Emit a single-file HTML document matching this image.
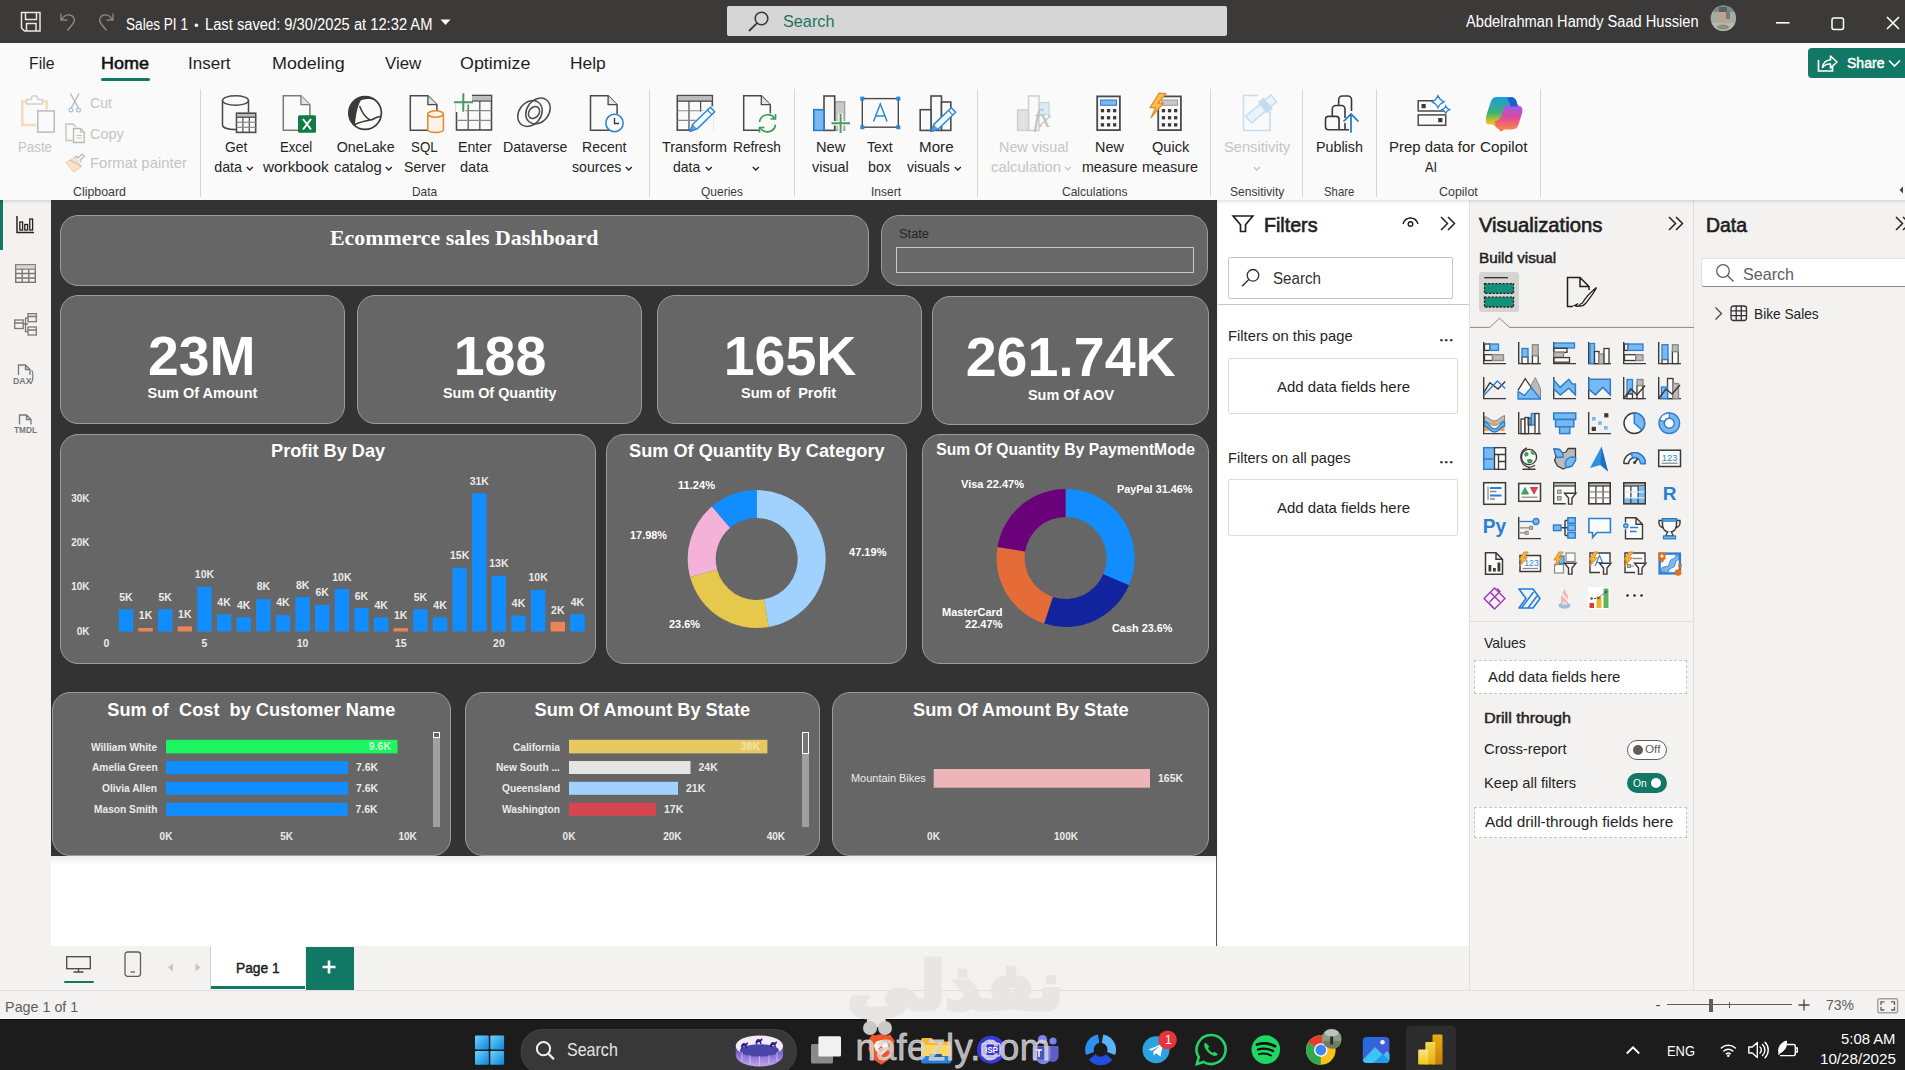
<!DOCTYPE html>
<html lang="en"><head><meta charset="utf-8"><title>Sales PI 1 - Power BI Desktop</title>
<style>
html,body{margin:0;padding:0}
body{width:1905px;height:1070px;position:relative;overflow:hidden;background:#f3f2f1;font-family:"Liberation Sans",sans-serif;color:#000}
.r{position:absolute;box-sizing:border-box;display:block}
.t{position:absolute;white-space:pre;display:block;transform-origin:0 0}
.card{background:#666;border:1px solid #9c9c9c;border-radius:18px}
svg{overflow:visible}
</style></head><body>

<div class="r titlebar" style="left:0px;top:0px;width:1905px;height:42.5px;background:#3b3a39">
<svg class="r" style="left:20px;top:11px;" width="22" height="22" viewBox="0 0 22 22"><path d="M1.5 1.5h18.5v18.5h-15.5l-3-3z M5.5 1.5v7h11v-7 M6.5 20v-7.5h9.5v7.5" fill="none" stroke="#e8e8e8" stroke-width="1.5"/></svg>
<svg class="r" style="left:58px;top:11px;" width="22" height="22" viewBox="0 0 22 22"><path d="M3 2.5v6.5h6.5 M3.5 8.5c2-3 5-5 8.5-4.5c4 .8 5.5 4.5 3.5 8l-6 7.5" fill="none" stroke="#8a8886" stroke-width="1.4"/></svg>
<svg class="r" style="left:93.5px;top:11px;" width="22" height="22" viewBox="0 0 22 22"><path d="M19 2.5v6.5h-6.5 M18.5 8.5c-2-3-5-5-8.5-4.5c-4 .8-5.5 4.5-3.5 8l6 7.5" fill="none" stroke="#8a8886" stroke-width="1.4"/></svg>
<span class="t" style="left:126.30px;top:16.79px;font-size:15.6px;line-height:15.6px;color:#fff;transform:scaleX(0.8719);">Sales PI 1</span>
<span class="t" style="left:194.30px;top:19.84px;font-size:12px;line-height:12px;color:#fff;">•</span>
<span class="t" style="left:204.50px;top:16.79px;font-size:15.6px;line-height:15.6px;color:#fff;transform:scaleX(0.9436);">Last saved: 9/30/2025 at 12:32 AM</span>
<svg class="r" style="left:440px;top:19px;" width="12" height="8" viewBox="0 0 12 8"><path d="M0.5 0.5h10l-5 5.5z" fill="#fff"/></svg>
<div class="r " style="left:727px;top:6px;width:500px;height:30px;background:#d6d6d6;border-radius:2px">
</div>
<svg class="r" style="left:747px;top:10px;" width="24" height="22" viewBox="0 0 24 22"><circle cx="14.5" cy="8.5" r="6.3" fill="none" stroke="#3b3a39" stroke-width="1.6"/><path d="M10 13.2L2 21" stroke="#3b3a39" stroke-width="1.8"/></svg>
<span class="t" style="left:783.00px;top:13.98px;font-size:16.8px;line-height:16.8px;color:#1f735f;transform:scaleX(0.9675);">Search</span>
<span class="t" style="left:1466.00px;top:13.59px;font-size:15.6px;line-height:15.6px;color:#fff;transform:scaleX(0.9383);">Abdelrahman Hamdy Saad Hussien</span>
<svg class="r" style="left:1710px;top:5px;" width="27" height="27" viewBox="0 0 27 27"><defs><clipPath id="av"><circle cx="13.4" cy="13.3" r="12.7"/></clipPath></defs>
<g clip-path="url(#av)"><rect width="27" height="27" fill="#a7aca3"/><rect x="0" y="0" width="27" height="7" fill="#7d8a86"/><rect x="0" y="18" width="27" height="9" fill="#b9b9ad"/>
<ellipse cx="13" cy="11" rx="3.2" ry="6" fill="#c9a085"/><rect x="9" y="2" width="8" height="5" fill="#5b5f66"/><rect x="16" y="6" width="4" height="8" fill="#6b7c8c"/><ellipse cx="13" cy="22" rx="6" ry="2.5" fill="#8c8c80"/></g></svg>
<svg class="r" style="left:1776px;top:21.5px;" width="14" height="2" viewBox="0 0 14 2"><rect width="13.5" height="1.6" fill="#fff"/></svg>
<svg class="r" style="left:1831px;top:16.5px;" width="14" height="14" viewBox="0 0 14 14"><rect x="1" y="1" width="11.5" height="11.5" rx="2" fill="none" stroke="#fff" stroke-width="1.5"/></svg>
<svg class="r" style="left:1886px;top:16px;" width="14" height="14" viewBox="0 0 14 14"><path d="M1 1l12 12M13 1L1 13" stroke="#fff" stroke-width="1.6"/></svg>
</div>
<div class="r ribbon" style="left:0px;top:42.5px;width:1905px;height:157.5px;background:#fafafa">
<span class="t" style="left:28.50px;top:12.44px;font-size:17.2px;line-height:17.2px;color:#1f1f1f;transform:scaleX(0.9200);">File</span>
<span class="t" style="left:101.30px;top:12.27px;font-size:17.4px;line-height:17.4px;color:#111;-webkit-text-stroke:0.56px #111;transform:scaleX(1.0341);">Home</span>
<span class="t" style="left:188.20px;top:12.44px;font-size:17.2px;line-height:17.2px;color:#1f1f1f;transform:scaleX(0.9903);">Insert</span>
<span class="t" style="left:271.60px;top:12.44px;font-size:17.2px;line-height:17.2px;color:#1f1f1f;transform:scaleX(1.0429);">Modeling</span>
<span class="t" style="left:384.70px;top:12.44px;font-size:17.2px;line-height:17.2px;color:#1f1f1f;transform:scaleX(0.9791);">View</span>
<span class="t" style="left:460.20px;top:12.44px;font-size:17.2px;line-height:17.2px;color:#1f1f1f;transform:scaleX(1.0389);">Optimize</span>
<span class="t" style="left:570.00px;top:12.44px;font-size:17.2px;line-height:17.2px;color:#1f1f1f;transform:scaleX(1.0120);">Help</span>
<div class="r" style="left:101px;top:35.5px;width:48.5px;height:3px;background:#117865;border-radius:1.5px"></div>
<div class="r " style="left:1808px;top:5.5px;width:100px;height:30px;background:#117865;border-radius:4px">
</div>
<svg class="r" style="left:1816px;top:9.5px;" width="22" height="22" viewBox="0 0 22 22"><path d="M2.5 8v11h14v-5" fill="none" stroke="#fff" stroke-width="1.7"/><path d="M6.5 15.5c.5-5 4-7.5 8-7.5v-4l6.5 6-6.5 6v-4c-3.500-.3-6 .8-8 3.500z" fill="none" stroke="#fff" stroke-width="1.6" stroke-linejoin="round"/></svg>
<span class="t" style="left:1847.00px;top:12.28px;font-size:15.5px;line-height:15.5px;color:#fff;-webkit-text-stroke:0.50px #fff;transform:scaleX(0.9066);">Share</span>
<svg class="r" style="left:1888px;top:16.5px;" width="14" height="9" viewBox="0 0 14 9"><path d="M1 1.500l5.500 5.500l5.500-5.500" fill="none" stroke="#fff" stroke-width="1.6"/></svg>
</div>
<div class="r ribbonbody" style="left:0px;top:85px;width:1905px;height:115px;">
<svg class="r" style="left:20px;top:9px;" width="36" height="40" viewBox="0 0 36 40"><path d="M6.500 7.500h-4.200v23.500h14" fill="none" stroke="#f6dcb8" stroke-width="2.600"/><path d="M22.500 7.500h4.200v8" fill="none" stroke="#f6dcb8" stroke-width="2.600"/>
<path d="M6.500 10v-4.500h4.500c.3-2.500 1.800-3.700 3.500-3.700s3.200 1.200 3.500 3.700h4.500v4.500z" fill="#fafafa" stroke="#d2d0ce" stroke-width="1.400"/>
<rect x="17.800" y="16.900" width="16.400" height="21.200" fill="#fafafa" stroke="#bdbbb9" stroke-width="1.500"/></svg>
<span class="t" style="left:18.00px;top:55.10px;font-size:14.3px;line-height:14.3px;color:#c6c4c2;transform:scaleX(0.9298);">Paste</span>
<svg class="r" style="left:66px;top:7px;" width="18" height="22" viewBox="0 0 18 22"><path d="M4.500 1.500l8 15M13 1.500l-8 15" stroke="#b5b3b1" stroke-width="1.200" fill="none"/><circle cx="5" cy="18" r="1.900" fill="none" stroke="#9fc3d6" stroke-width="1.200"/><circle cx="12.500" cy="18" r="1.900" fill="none" stroke="#9fc3d6" stroke-width="1.200"/></svg>
<span class="t" style="left:90.20px;top:11.10px;font-size:14.3px;line-height:14.3px;color:#c6c4c2;transform:scaleX(0.9886);">Cut</span>
<svg class="r" style="left:65px;top:38px;" width="21" height="21" viewBox="0 0 21 21"><path d="M7.500 17.500h-6.500v-16.500h7l3 3" fill="#fafafa" stroke="#c4c2c0" stroke-width="1.300"/><path d="M8.500 5.500h7l3.700 3.700v10.300h-10.700z" fill="#fafafa" stroke="#b9b7b5" stroke-width="1.300"/><path d="M15.500 5.500v3.700h3.700M11.500 12.500h5.500M11.500 15h5.500" stroke="#c4c2c0" stroke-width="1.100" fill="none"/></svg>
<span class="t" style="left:90.20px;top:41.70px;font-size:14.3px;line-height:14.3px;color:#c6c4c2;transform:scaleX(1.0125);">Copy</span>
<svg class="r" style="left:65px;top:68px;" width="21" height="20" viewBox="0 0 21 20"><path d="M1 9.500l8.500-5l7 9l-8 5.500z" fill="#fbe3c8" stroke="#f3c9a0" stroke-width="1"/><path d="M5 7l11.500 6.500" stroke="#c4c2c0" stroke-width="1.200"/><path d="M9.500 4.500l1.800-1.200l1.500 1.800l4.500-4l2 2.200l-4.300 4l1.500 2" fill="#fafafa" stroke="#bdbbb9" stroke-width="1.300"/></svg>
<span class="t" style="left:90.20px;top:71.10px;font-size:14.3px;line-height:14.3px;color:#c6c4c2;transform:scaleX(1.0431);">Format painter</span>
<span class="t" style="left:73.40px;top:101.13px;font-size:12.6px;line-height:12.6px;color:#3b3a39;transform:scaleX(0.9827);">Clipboard</span>
<div class="r" style="left:200px;top:3.5px;width:1px;height:108px;background:#d8d6d4"></div>
<span class="t" style="left:224.60px;top:55.10px;font-size:14.3px;line-height:14.3px;color:#252423;transform:scaleX(0.9719);">Get</span>
<span class="t" style="left:214.20px;top:75.20px;font-size:14.3px;line-height:14.3px;color:#252423;">data</span>
<span class="t" style="left:280.20px;top:55.10px;font-size:14.3px;line-height:14.3px;color:#252423;transform:scaleX(0.9208);">Excel</span>
<span class="t" style="left:263.00px;top:75.20px;font-size:14.3px;line-height:14.3px;color:#252423;transform:scaleX(1.0718);">workbook</span>
<span class="t" style="left:336.70px;top:55.10px;font-size:14.3px;line-height:14.3px;color:#252423;">OneLake</span>
<span class="t" style="left:334.00px;top:75.20px;font-size:14.3px;line-height:14.3px;color:#252423;transform:scaleX(1.0322);">catalog</span>
<span class="t" style="left:410.80px;top:55.10px;font-size:14.3px;line-height:14.3px;color:#252423;transform:scaleX(0.9331);">SQL</span>
<span class="t" style="left:404.00px;top:75.20px;font-size:14.3px;line-height:14.3px;color:#252423;transform:scaleX(0.9876);">Server</span>
<span class="t" style="left:457.70px;top:55.10px;font-size:14.3px;line-height:14.3px;color:#252423;transform:scaleX(0.9859);">Enter</span>
<span class="t" style="left:460.00px;top:75.20px;font-size:14.3px;line-height:14.3px;color:#252423;transform:scaleX(1.0204);">data</span>
<span class="t" style="left:502.50px;top:55.10px;font-size:14.3px;line-height:14.3px;color:#252423;transform:scaleX(0.9896);">Dataverse</span>
<span class="t" style="left:582.00px;top:55.10px;font-size:14.3px;line-height:14.3px;color:#252423;transform:scaleX(0.9821);">Recent</span>
<span class="t" style="left:571.60px;top:75.20px;font-size:14.3px;line-height:14.3px;color:#252423;transform:scaleX(0.9866);">sources</span>
<span class="t" style="left:662.30px;top:55.10px;font-size:14.3px;line-height:14.3px;color:#252423;transform:scaleX(1.0058);">Transform</span>
<span class="t" style="left:673.40px;top:75.20px;font-size:14.3px;line-height:14.3px;color:#252423;transform:scaleX(0.9773);">data</span>
<span class="t" style="left:733.40px;top:55.10px;font-size:14.3px;line-height:14.3px;color:#252423;transform:scaleX(0.9566);">Refresh</span>
<span class="t" style="left:815.50px;top:55.10px;font-size:14.3px;line-height:14.3px;color:#252423;transform:scaleX(1.0242);">New</span>
<span class="t" style="left:811.50px;top:75.20px;font-size:14.3px;line-height:14.3px;color:#252423;transform:scaleX(1.0065);">visual</span>
<span class="t" style="left:867.00px;top:55.10px;font-size:14.3px;line-height:14.3px;color:#252423;transform:scaleX(0.9761);">Text</span>
<span class="t" style="left:868.00px;top:75.20px;font-size:14.3px;line-height:14.3px;color:#252423;">box</span>
<span class="t" style="left:919.40px;top:55.10px;font-size:14.3px;line-height:14.3px;color:#252423;transform:scaleX(1.0619);">More</span>
<span class="t" style="left:907.30px;top:75.20px;font-size:14.3px;line-height:14.3px;color:#252423;transform:scaleX(0.9769);">visuals</span>
<span class="t" style="left:1095.20px;top:55.10px;font-size:14.3px;line-height:14.3px;color:#252423;transform:scaleX(1.0067);">New</span>
<span class="t" style="left:1081.60px;top:75.20px;font-size:14.3px;line-height:14.3px;color:#252423;transform:scaleX(0.9957);">measure</span>
<span class="t" style="left:1151.70px;top:55.10px;font-size:14.3px;line-height:14.3px;color:#252423;transform:scaleX(1.0204);">Quick</span>
<span class="t" style="left:1142.00px;top:75.20px;font-size:14.3px;line-height:14.3px;color:#252423;transform:scaleX(1.0065);">measure</span>
<span class="t" style="left:1316.00px;top:55.10px;font-size:14.3px;line-height:14.3px;color:#252423;">Publish</span>
<span class="t" style="left:1389.00px;top:55.10px;font-size:14.3px;line-height:14.3px;color:#252423;transform:scaleX(1.0426);">Prep data for</span>
<span class="t" style="left:1480.30px;top:55.10px;font-size:14.3px;line-height:14.3px;color:#252423;transform:scaleX(1.0648);">Copilot</span>
<span class="t" style="left:1425.30px;top:75.20px;font-size:14.3px;line-height:14.3px;color:#252423;transform:scaleX(0.8955);">AI</span>
<span class="t" style="left:999.00px;top:55.10px;font-size:14.3px;line-height:14.3px;color:#c6c4c2;transform:scaleX(1.0052);">New visual</span>
<span class="t" style="left:990.90px;top:75.20px;font-size:14.3px;line-height:14.3px;color:#c6c4c2;transform:scaleX(1.0374);">calculation</span>
<span class="t" style="left:1223.70px;top:55.10px;font-size:14.3px;line-height:14.3px;color:#c6c4c2;transform:scaleX(1.0268);">Sensitivity</span>
<svg class="r" style="left:245.5px;top:80.5px;" width="8" height="6" viewBox="0 0 8 6"><path d="M0.8 1l3 3l3-3" fill="none" stroke="#252423" stroke-width="1.3"/></svg>
<svg class="r" style="left:384.5px;top:80.5px;" width="8" height="6" viewBox="0 0 8 6"><path d="M0.8 1l3 3l3-3" fill="none" stroke="#252423" stroke-width="1.3"/></svg>
<svg class="r" style="left:624.5px;top:80.5px;" width="8" height="6" viewBox="0 0 8 6"><path d="M0.8 1l3 3l3-3" fill="none" stroke="#252423" stroke-width="1.3"/></svg>
<svg class="r" style="left:705px;top:80.5px;" width="8" height="6" viewBox="0 0 8 6"><path d="M0.8 1l3 3l3-3" fill="none" stroke="#252423" stroke-width="1.3"/></svg>
<svg class="r" style="left:953.5px;top:80.5px;" width="8" height="6" viewBox="0 0 8 6"><path d="M0.8 1l3 3l3-3" fill="none" stroke="#252423" stroke-width="1.3"/></svg>
<svg class="r" style="left:752.3px;top:80.5px;" width="8" height="6" viewBox="0 0 8 6"><path d="M0.8 1l3 3l3-3" fill="none" stroke="#252423" stroke-width="1.3"/></svg>
<svg class="r" style="left:1064px;top:80.5px;" width="8" height="6" viewBox="0 0 8 6"><path d="M0.8 1l3 3l3-3" fill="none" stroke="#c6c4c2" stroke-width="1.3"/></svg>
<svg class="r" style="left:1252.5px;top:80.5px;" width="8" height="6" viewBox="0 0 8 6"><path d="M0.8 1l3 3l3-3" fill="none" stroke="#c6c4c2" stroke-width="1.3"/></svg>
<span class="t" style="left:412.30px;top:101.13px;font-size:12.6px;line-height:12.6px;color:#3b3a39;transform:scaleX(0.9468);">Data</span>
<span class="t" style="left:701.00px;top:101.13px;font-size:12.6px;line-height:12.6px;color:#3b3a39;transform:scaleX(0.9520);">Queries</span>
<span class="t" style="left:871.00px;top:101.13px;font-size:12.6px;line-height:12.6px;color:#3b3a39;transform:scaleX(0.9520);">Insert</span>
<span class="t" style="left:1062.00px;top:101.13px;font-size:12.6px;line-height:12.6px;color:#3b3a39;transform:scaleX(0.9543);">Calculations</span>
<span class="t" style="left:1229.80px;top:101.13px;font-size:12.6px;line-height:12.6px;color:#3b3a39;transform:scaleX(0.9591);">Sensitivity</span>
<span class="t" style="left:1324.00px;top:101.13px;font-size:12.6px;line-height:12.6px;color:#3b3a39;transform:scaleX(0.9011);">Share</span>
<span class="t" style="left:1439.00px;top:101.13px;font-size:12.6px;line-height:12.6px;color:#3b3a39;transform:scaleX(0.9892);">Copilot</span>
<div class="r" style="left:649px;top:3.5px;width:1px;height:108px;background:#d8d6d4"></div>
<div class="r" style="left:794px;top:3.5px;width:1px;height:108px;background:#d8d6d4"></div>
<div class="r" style="left:977px;top:3.5px;width:1px;height:108px;background:#d8d6d4"></div>
<div class="r" style="left:1210px;top:3.5px;width:1px;height:108px;background:#d8d6d4"></div>
<div class="r" style="left:1302px;top:3.5px;width:1px;height:108px;background:#d8d6d4"></div>
<div class="r" style="left:1376px;top:3.5px;width:1px;height:108px;background:#d8d6d4"></div>
<div class="r" style="left:1540px;top:3.5px;width:1px;height:108px;background:#d8d6d4"></div>
<svg class="r" style="left:1898px;top:101px;" width="6" height="8" viewBox="0 0 6 8"><path d="M5 0.500l-3.500 3.500l3.500 3.500z" fill="#444"/></svg>
<svg class="r" style="left:0px;top:0px;" width="1905" height="115" viewBox="0 0 1905 115"><path d="M222.500 15.5v24.500c0 2.500 5 4.500 13.500 4.500M248.500 15.5v12" fill="none" stroke="#4a4a4a" stroke-width="1.500"/><ellipse cx="235.500" cy="15.5" rx="13" ry="4.800" fill="#fafafa" stroke="#4a4a4a" stroke-width="1.500"/><rect x="236.5" y="28.200000000000003" width="19.2" height="19.2" fill="#fafafa" stroke="#4a4a4a" stroke-width="1.600"/><rect x="237.3" y="29.000000000000004" width="17.599999999999998" height="4" fill="#bdbdbd"/><path d="M242.90 32.2v15.2" stroke="#4a4a4a" stroke-width="1.200"/><path d="M249.30 32.2v15.2" stroke="#4a4a4a" stroke-width="1.200"/><path d="M236.5 32.20h19.2" stroke="#4a4a4a" stroke-width="1.200"/><path d="M236.5 37.27h19.2" stroke="#8a8a8a" stroke-width="1.200"/><path d="M236.5 42.33h19.2" stroke="#8a8a8a" stroke-width="1.200"/><path d="M283.3 10.700000000000003h17.6l9 9v25.5h-26.6z" fill="#fafafa" stroke="#7a7a7a" stroke-width="1.500"/><path d="M300.90000000000003 10.700000000000003v9h9" fill="#e3e3e3" stroke="#7a7a7a" stroke-width="1.300"/><rect x="298" y="30.299999999999997" width="18" height="17.500" rx="1.500" fill="#107c41"/><path d="M303 34l8 10.500M311 34l-8 10.500" stroke="#fff" stroke-width="2"/><circle cx="365.1" cy="28" r="16.300" fill="#fafafa" stroke="#3b3a39" stroke-width="1.700"/><path d="M363.1 11.7A16.300 16.300 0 0 0 354.6 40.5C356.1 33 356.1 21 363.1 11.7z" fill="#3b3a39"/><path d="M360.1 12.5C365.1 9.5 373.1 12 374.6 15.5C369.1 13 364.1 14 359.1 16z" fill="#3b3a39"/><path d="M359.6 21C362.1 28 366.1 33 370.1 35C374.1 35 376.1 31 380.6 31.5M354.6 39.5C360.1 37 365.1 36 370.1 35" fill="none" stroke="#3b3a39" stroke-width="1.500"/><path d="M410.3 10.700000000000003h17.6l9 9v25.5h-26.6z" fill="#fafafa" stroke="#4a4a4a" stroke-width="1.500"/><path d="M427.90000000000003 10.700000000000003v9h9" fill="#e3e3e3" stroke="#4a4a4a" stroke-width="1.300"/><path d="M427.800 29v15.500c0 4 15.600 4 15.600 0v-15.500" fill="#fdf3e7" stroke="#e8852a" stroke-width="1.500"/><ellipse cx="435.600" cy="29" rx="7.800" ry="3.200" fill="#fdf3e7" stroke="#e8852a" stroke-width="1.500"/><rect x="456.5" y="10.5" width="35" height="34.5" fill="#fafafa" stroke="#4a4a4a" stroke-width="1.600"/><rect x="457.3" y="11.3" width="33.4" height="5.5" fill="#bdbdbd"/><path d="M468.17 16.0v29.0" stroke="#4a4a4a" stroke-width="1.200"/><path d="M479.83 16.0v29.0" stroke="#4a4a4a" stroke-width="1.200"/><path d="M456.5 16.00h35" stroke="#4a4a4a" stroke-width="1.200"/><path d="M456.5 25.67h35" stroke="#8a8a8a" stroke-width="1.200"/><path d="M456.5 35.33h35" stroke="#8a8a8a" stroke-width="1.200"/><rect x="453" y="7.5" width="19" height="12" fill="#fafafa"/><rect x="455.700" y="18" width="10" height="9" fill="#fafafa"/><path d="M463.300 8.200000000000003v18.500M454 17.299999999999997h19" stroke="#4a9b5c" stroke-width="2"/><g fill="none" stroke="#4a4a4a" stroke-width="1.500"><ellipse cx="530" cy="28.5" rx="11" ry="14" transform="rotate(38 530 28.5)"/><ellipse cx="538" cy="26" rx="11" ry="14" transform="rotate(38 538 26)"/><ellipse cx="534" cy="27.5" rx="5" ry="6.500" transform="rotate(38 534 27.5)"/></g><path d="M590.5 10.700000000000003h17.6l9 9v25.5h-26.6z" fill="#fafafa" stroke="#4a4a4a" stroke-width="1.500"/><path d="M608.1 10.700000000000003v9h9" fill="#e3e3e3" stroke="#4a4a4a" stroke-width="1.300"/><circle cx="614.500" cy="38" r="8.700" fill="#fafafa" stroke="#2b88d8" stroke-width="1.600"/><path d="M614.500 33v5.500h4.500" fill="none" stroke="#3b3a39" stroke-width="1.400"/><rect x="677.3" y="10.599999999999994" width="35" height="34.5" fill="#fafafa" stroke="#4a4a4a" stroke-width="1.600"/><rect x="678.0999999999999" y="11.399999999999995" width="33.4" height="5.5" fill="#bdbdbd"/><path d="M688.97 16.099999999999994v29.0" stroke="#4a4a4a" stroke-width="1.200"/><path d="M700.63 16.099999999999994v29.0" stroke="#4a4a4a" stroke-width="1.200"/><path d="M677.3 16.10h35" stroke="#4a4a4a" stroke-width="1.200"/><path d="M677.3 25.77h35" stroke="#8a8a8a" stroke-width="1.200"/><path d="M677.3 35.43h35" stroke="#8a8a8a" stroke-width="1.200"/><path d="M700 27l13 -6v26h-24z" fill="#fafafa"/><path d="M710.3 22.2L692.8 39.3L690.0 46.5L697.2 43.9L714.7 26.8Z" fill="#f4f9fd" stroke="#2b88d8" stroke-width="1.500" stroke-linejoin="round"/><path d="M692.8 39.3L690.0 46.5L697.2 43.9Z" fill="#2b88d8" opacity=".75"/><path d="M707.4 25.0L711.9 29.6" stroke="#2b88d8" stroke-width="1.200"/><path d="M743.7 10.700000000000003h17.6l9 9v25.5h-26.6z" fill="#fafafa" stroke="#4a4a4a" stroke-width="1.500"/><path d="M761.3000000000001 10.700000000000003v9h9" fill="#e3e3e3" stroke="#4a4a4a" stroke-width="1.300"/><circle cx="767.500" cy="38.3" r="10.500" fill="#fafafa"/><g fill="none" stroke="#3a9d53" stroke-width="1.700"><path d="M759.500 37a8.200 8.200 0 0 1 15-3.500M775.500 39.599999999999994a8.200 8.200 0 0 1 -15 3.500"/><path d="M775.500 29v5h-5M759.500 47.5v-5h5"/></g><rect x="834.700" y="16.799999999999997" width="10" height="28.500" fill="#c8c8c8" stroke="#9a9a9a" stroke-width="1.200"/><rect x="824" y="11" width="10.700" height="34.400" fill="#fafafa" stroke="#4a4a4a" stroke-width="1.600"/><rect x="813.800" y="24.700000000000003" width="10.200" height="20.700" fill="#7ab8f0" stroke="#2b7bd0" stroke-width="1.600"/><path d="M840.600 28.5v20M831 38.3h19.500" stroke="#fafafa" stroke-width="4.500"/><path d="M840.600 29v19M831.500 38.3h18.500" stroke="#4a9b5c" stroke-width="1.900"/><rect x="862.300" y="13.599999999999994" width="36" height="28.600" fill="#fafafa" stroke="#4a4a4a" stroke-width="1.400"/><rect x="860.3" y="11.599999999999994" width="4" height="4" fill="#2b88d8"/><rect x="896.3" y="11.599999999999994" width="4" height="4" fill="#2b88d8"/><rect x="860.3" y="40.2" width="4" height="4" fill="#2b88d8"/><rect x="896.3" y="40.2" width="4" height="4" fill="#2b88d8"/><path d="M873.500 36.5l6.800-17.500l6.800 17.500M876 31h8.600" fill="none" stroke="#2b88d8" stroke-width="1.500"/><rect x="931" y="11" width="10.500" height="34.400" fill="#fafafa" stroke="#4a4a4a" stroke-width="1.600"/><rect x="920.200" y="24.700000000000003" width="10.800" height="20.700" fill="#fafafa" stroke="#4a4a4a" stroke-width="1.600"/><rect x="941.500" y="17" width="9.300" height="28.400" fill="#fafafa" stroke="#4a4a4a" stroke-width="1.600"/><path d="M951.3 22.7L933.9 39.4L931.0 46.5L938.3 44.0L955.7 27.3Z" fill="#f4f9fd" stroke="#2b88d8" stroke-width="1.500" stroke-linejoin="round"/><path d="M933.9 39.4L931.0 46.5L938.3 44.0Z" fill="#2b88d8" opacity=".75"/><path d="M948.4 25.4L952.8 30.1" stroke="#2b88d8" stroke-width="1.200"/><rect x="1039" y="17.5" width="10" height="12" fill="#dcebf5" stroke="#c0d6e4" stroke-width="1.200"/><rect x="1028.500" y="11" width="10.500" height="34.400" fill="#fafafa" stroke="#cfcfcf" stroke-width="1.500"/><rect x="1017.600" y="25" width="10.900" height="20.400" fill="#e3e3e3" stroke="#cfcfcf" stroke-width="1.500"/><rect x="1097.2" y="11.4" width="22.700" height="33.700" fill="#fafafa" stroke="#4a4a4a" stroke-width="1.800"/><rect x="1100.6" y="15.0" width="15.900" height="5.300" fill="#7ab8f0" stroke="#2b7bd0" stroke-width="1"/><rect x="1100.8" y="24.0" width="3.300" height="3.300" fill="#3b3a39"/><rect x="1106.8999999999999" y="24.0" width="3.300" height="3.300" fill="#3b3a39"/><rect x="1113.0" y="24.0" width="3.300" height="3.300" fill="#3b3a39"/><rect x="1100.8" y="31.1" width="3.300" height="3.300" fill="#3b3a39"/><rect x="1106.8999999999999" y="31.1" width="3.300" height="3.300" fill="#3b3a39"/><rect x="1113.0" y="31.1" width="3.300" height="3.300" fill="#3b3a39"/><rect x="1100.8" y="38.2" width="3.300" height="3.300" fill="#3b3a39"/><rect x="1106.8999999999999" y="38.2" width="3.300" height="3.300" fill="#3b3a39"/><rect x="1113.0" y="38.2" width="3.300" height="3.300" fill="#3b3a39"/><rect x="1158.2" y="11.4" width="22.700" height="33.700" fill="#fafafa" stroke="#4a4a4a" stroke-width="1.800"/><rect x="1161.6" y="15.0" width="15.900" height="5.300" fill="#c8c8c8" stroke="#9a9a9a" stroke-width="1"/><rect x="1161.8" y="24.0" width="3.300" height="3.300" fill="#3b3a39"/><rect x="1167.8999999999999" y="24.0" width="3.300" height="3.300" fill="#3b3a39"/><rect x="1174.0" y="24.0" width="3.300" height="3.300" fill="#3b3a39"/><rect x="1161.8" y="31.1" width="3.300" height="3.300" fill="#3b3a39"/><rect x="1167.8999999999999" y="31.1" width="3.300" height="3.300" fill="#3b3a39"/><rect x="1174.0" y="31.1" width="3.300" height="3.300" fill="#3b3a39"/><rect x="1161.8" y="38.2" width="3.300" height="3.300" fill="#3b3a39"/><rect x="1167.8999999999999" y="38.2" width="3.300" height="3.300" fill="#3b3a39"/><rect x="1174.0" y="38.2" width="3.300" height="3.300" fill="#3b3a39"/><path d="M1159 8.200000000000003l-9 14.500h5.500l-4.500 10l12.500-14.500h-5.500l8-9.500z" fill="#f8c04a" stroke="#e8852a" stroke-width="1.200" stroke-linejoin="round"/><path d="M1258 10.5h-14.500v35h26.500v-19" fill="none" stroke="#c5dcec" stroke-width="1.500"/><g transform="rotate(-40 1260 25)" fill="#eaf3f9" stroke="#c5dcec" stroke-width="1.400"><rect x="1245" y="20.5" width="19" height="9"/><rect x="1264" y="18.5" width="6" height="13" fill="#c5dcec"/><rect x="1270" y="20.5" width="8" height="9"/></g><g fill="#fafafa" stroke="#3b3a39" stroke-width="1.600"><path d="M1351.500 26v-11.500a3.500 3.500 0 0 0 -3.500 -3.500h-5.800a3.500 3.500 0 0 0 -3.500 3.500v30"/><path d="M1345 33v-9a3.500 3.500 0 0 0 -3.500 -3.500h-5.700a3.500 3.500 0 0 0 -3.500 3.500v8"/><path d="M1349 44.80000000000001h-20.500a3 3 0 0 1 -3 -3v-7.400a3 3 0 0 1 3 -3h7.500a3 3 0 0 1 3 3v10.400M1345 38v6.800"/></g><path d="M1351 47.80000000000001v-18.500M1343.500 36.5l7.500-7.500l7.500 7.500" fill="none" stroke="#1f78c1" stroke-width="1.700"/><g fill="#fafafa" stroke="#4a4a4a" stroke-width="1.500"><path d="M1434 15.799999999999997h-15.800v10.200h27.500v-2"/><rect x="1418.200" y="29.900000000000006" width="27.500" height="10.400"/></g><rect x="1421.500" y="19" width="4.200" height="4.200" fill="#3b3a39"/><rect x="1438.200" y="33" width="4.200" height="4.200" fill="#3b3a39"/><path d="M1438 10.799999999999997Q1439.68 15.119999999999997 1444 16.799999999999997Q1439.68 18.479999999999997 1438 22.799999999999997Q1436.32 18.479999999999997 1432 16.799999999999997Q1436.32 15.119999999999997 1438 10.799999999999997z" fill="#fafafa" stroke="#2b88d8" stroke-width="1.300"/><path d="M1445.8 20.899999999999995Q1446.836 23.563999999999993 1449.5 24.599999999999994Q1446.836 25.635999999999996 1445.8 28.299999999999994Q1444.764 25.635999999999996 1442.1 24.599999999999994Q1444.764 23.563999999999993 1445.8 20.899999999999995z" fill="#fafafa" stroke="#2b88d8" stroke-width="1.300"/><defs><linearGradient id="cpa" x1="0" y1="0" x2="0" y2="1"><stop offset="0" stop-color="#1b9de2"/><stop offset=".45" stop-color="#3bb273"/><stop offset=".75" stop-color="#e8c31a"/><stop offset="1" stop-color="#f26b3a"/></linearGradient>
<linearGradient id="cpb" x1="0" y1="0" x2="0" y2="1"><stop offset="0" stop-color="#9b5cf0"/><stop offset=".5" stop-color="#e0489b"/><stop offset="1" stop-color="#f9844a"/></linearGradient></defs><path d="M1497 12h14c3 0 4.500 1.500 5.500 4.500l1.500 5h-7l-7 22c-1 3-3 4-5 1c-5-5-7-6-11-5c-3-2-2.500-6-1-11l3.500-11c1.500-4 3-5.500 6.500-5.500z" fill="url(#cpa)"/><path d="M1510 44.400000000000006h-9c-3 0-4.500-1.500-5.500-4.500l-1-3.500c4-1 6-3 7-6l3-10h13c4 0 6 3 4.500 8l-3.500 11c-1.300 3.800-3.500 5-8.500 5z" fill="url(#cpb)"/><path d="M1507 14c3-3 8-2 9.500 2.500l1.500 5h-7.500c-.5-3-1.500-5.500-3.500-7.500z" fill="#1a5fd0"/></svg>
<span class="t" style="left:1033.50px;top:21.49px;font-size:26px;line-height:26px;color:#c2c0be;font-family:'Liberation Serif',serif;font-style:italic;letter-spacing:-1.5px;">fx</span>
</div>
<div class="r nav" style="left:0px;top:200px;width:51px;height:790px;background:#f3f2f1">
<div class="r" style="left:0px;top:-0.5px;width:3px;height:50px;background:#117865"></div>
<svg class="r" style="left:16px;top:16px;" width="19" height="18" viewBox="0 0 19 18"><path d="M1 0v16.500h17" fill="none" stroke="#252423" stroke-width="1.500"/><g fill="none" stroke="#252423" stroke-width="1.300"><rect x="3.800" y="6" width="2.800" height="8"/><rect x="8.800" y="8.500" width="2.800" height="5.500"/><rect x="13.800" y="3" width="2.800" height="11"/></g></svg>
<svg class="r" style="left:15px;top:64px;" width="21" height="19" viewBox="0 0 21 19"><g fill="none" stroke="#7a7876" stroke-width="1.400"><rect x="0.700" y="0.700" width="19.600" height="17.600"/><path d="M0.700 5h19.600M0.700 9.500h19.600M0.700 14h19.600M7.200 5v13.300M13.800 5v13.300"/></g><rect x="0.700" y="0.700" width="19.600" height="4.300" fill="#c8c6c4" opacity=".6"/></svg>
<svg class="r" style="left:14px;top:113px;" width="23" height="23" viewBox="0 0 23 23"><g fill="#f3f2f1" stroke="#7a7876" stroke-width="1.300"><path d="M9 11h5M11.500 5v13.500h2.500M11.500 5h2.500" fill="none"/><rect x="0.700" y="7" width="8.500" height="8.500"/><rect x="14" y="0.700" width="8.300" height="8"/><rect x="14" y="14" width="8.300" height="8"/><path d="M0.700 10h8.500M14 3.500h8.300M14 17h8.300" fill="none"/></g></svg>
<svg class="r" style="left:12px;top:164px;" width="24" height="22" viewBox="0 0 24 22"><path d="M6.500 11v-10h7l4.500 4.500v5.500M13.500 1v4.500h4.500" fill="none" stroke="#7a7876" stroke-width="1.300"/><path d="M19.500 6.500c2 1 2 11-1 13" fill="none" stroke="#7a7876" stroke-width="1.200"/></svg>
<span class="t" style="left:13.20px;top:177.56px;font-size:8.2px;line-height:8.2px;color:#7a7876;font-weight:700;transform:scaleX(1.0685);">DAX</span>
<svg class="r" style="left:12px;top:214px;" width="26" height="22" viewBox="0 0 26 22"><path d="M7.500 10.500v-9.500h7l4.500 4.500v5M14.500 1v4.500h4.500" fill="none" stroke="#7a7876" stroke-width="1.300"/></svg>
<span class="t" style="left:14.00px;top:227.36px;font-size:8.2px;line-height:8.2px;color:#7a7876;font-weight:700;transform:scaleX(1.0101);">TMDL</span>
</div>
<div class="r" style="left:51px;top:856px;width:1166px;height:89.5px;background:linear-gradient(#ececec,#fff 9px)"></div>
<div class="r" style="left:1216.4px;top:856px;width:1px;height:89.5px;background:#5a5a5a"></div>
<div class="r filters" style="left:1218px;top:200px;width:250.5px;height:745.5px;background:#fff">
<svg class="r" style="left:14px;top:15px;" width="22" height="18" viewBox="0 0 22 18"><path d="M1.200 1h19.600l-7.300 8.800v6.700h-5v-6.700z" fill="none" stroke="#201f1e" stroke-width="1.700" stroke-linejoin="miter"/></svg>
<span class="t" style="left:45.80px;top:15.66px;font-size:19.3px;line-height:19.3px;color:#201f1e;-webkit-text-stroke:0.62px #201f1e;transform:scaleX(1.0183);">Filters</span>
<svg class="r" style="left:184px;top:17px;" width="17" height="11" viewBox="0 0 17 11"><path d="M1 7c2.500-8 12.500-8 15 0" fill="none" stroke="#201f1e" stroke-width="1.400"/><circle cx="8.500" cy="7" r="2.300" fill="none" stroke="#201f1e" stroke-width="1.400"/></svg>
<svg class="r" style="left:222px;top:16px;" width="16" height="15" viewBox="0 0 16 15"><path d="M1 1l6.500 6.500l-6.500 6.500M8 1l6.500 6.500l-6.500 6.500" fill="none" stroke="#252423" stroke-width="1.500"/></svg>
<div class="r" style="left:10px;top:57px;width:225px;height:42px;border:1px solid #c8c6c4;border-radius:2px;background:#fff"></div>
<svg class="r" style="left:23px;top:68px;" width="20" height="20" viewBox="0 0 20 20"><circle cx="12" cy="7.300" r="5.800" fill="none" stroke="#323130" stroke-width="1.300"/><path d="M7.800 11.500L1 18.300" stroke="#323130" stroke-width="1.400"/></svg>
<span class="t" style="left:55.20px;top:71.43px;font-size:15.8px;line-height:15.8px;color:#323130;transform:scaleX(0.9588);">Search</span>
<div class="r" style="left:0px;top:104px;width:250.5px;height:1px;background:#c8c6c4"></div>
<span class="t" style="left:10.30px;top:128.50px;font-size:14.3px;line-height:14.3px;color:#252423;transform:scaleX(1.0321);">Filters on this page</span>
<span class="t" style="left:221.00px;top:127.80px;font-size:15px;line-height:15px;color:#252423;-webkit-text-stroke:0.48px #252423;transform:scaleX(1.1599);">...</span>
<div class="r" style="left:10px;top:157.5px;width:230px;height:56px;border:1px solid #dddbd9;background:#fff;border-radius:2px"></div>
<span class="t" style="left:58.50px;top:179.90px;font-size:14.3px;line-height:14.3px;color:#252423;transform:scaleX(1.0456);">Add data fields here</span>
<span class="t" style="left:10.30px;top:251.10px;font-size:14.3px;line-height:14.3px;color:#252423;transform:scaleX(1.0206);">Filters on all pages</span>
<span class="t" style="left:221.00px;top:250.30px;font-size:15px;line-height:15px;color:#252423;-webkit-text-stroke:0.48px #252423;transform:scaleX(1.1599);">...</span>
<div class="r" style="left:10px;top:279px;width:230px;height:56.5px;border:1px solid #dddbd9;background:#fff;border-radius:2px"></div>
<span class="t" style="left:58.50px;top:301.40px;font-size:14.3px;line-height:14.3px;color:#252423;transform:scaleX(1.0456);">Add data fields here</span>
</div>
<div class="r viz" style="left:1468.5px;top:200px;width:225.5px;height:790px;background:#f3f2f1;box-shadow:inset 1px 0 0 #e1dfdd,inset -1px 0 0 #e1dfdd">
<span class="t" style="left:10.50px;top:15.66px;font-size:19.3px;line-height:19.3px;color:#201f1e;-webkit-text-stroke:0.62px #201f1e;transform:scaleX(1.0488);">Visualizations</span>
<svg class="r" style="left:199.5px;top:16px;" width="16" height="15" viewBox="0 0 16 15"><path d="M1 1l6.500 6.500l-6.500 6.500M8 1l6.500 6.500l-6.500 6.500" fill="none" stroke="#252423" stroke-width="1.500"/></svg>
<span class="t" style="left:10.50px;top:50.60px;font-size:14.3px;line-height:14.3px;color:#201f1e;-webkit-text-stroke:0.46px #201f1e;transform:scaleX(1.0673);">Build visual</span>
<div class="r" style="left:10.900000000000091px;top:72.30000000000001px;width:39.5px;height:39.4px;background:#d6d4d2;border-radius:3px"></div>
<svg class="r" style="left:10.5px;top:72px;" width="40" height="40" viewBox="0 0 40 40"><path d="M5.200 5.700h23.800" stroke="#201f1e" stroke-width="1.200"/><rect x="5.500" y="11.600" width="29" height="9.800" fill="#13917a" stroke="#201f1e" stroke-width="1.300" stroke-dasharray="2.200 1.400"/><rect x="5.500" y="25.200" width="29" height="9.800" fill="#13917a" stroke="#201f1e" stroke-width="1.300" stroke-dasharray="2.200 1.400"/></svg>
<svg class="r" style="left:97.5px;top:76px;" width="32" height="32" viewBox="0 0 32 32"><path d="M7 30.500h-5.500v-29h12.500l9 9v3.500M14 1.500v9h9" fill="none" stroke="#201f1e" stroke-width="1.500"/><path d="M30.500 11.500c-5 4-11 10-14 15.500c-1.500 .5-3 1.500-3.500 3c2.500 .5 5-.5 6.500-2.500c4-5 8.500-10.500 11-16z" fill="#f3f2f1" stroke="#201f1e" stroke-width="1.300"/><path d="M13 30c-1.500 .5-3 .3-4.500-.5c1.500-.3 2.500-1 3.500-2" fill="none" stroke="#201f1e" stroke-width="1.300"/></svg>
<svg class="r" style="left:1.0px;top:117px;" width="224" height="12" viewBox="0 0 224 12"><path d="M0 10.400h19.800l9.700-9.200l10 9.200h184.500" fill="none" stroke="#8a8886" stroke-width="1"/></svg>
<svg class="r" style="left:14.799999999999955px;top:142.39999999999998px;" width="24" height="24" viewBox="0 0 24 24"><path d="M0.700 0v21.600h22.300" fill="none" stroke="#3b3a39" stroke-width="1.4" /><rect x="1.5" y="2" width="5.5" height="6.4" fill="#fbfbfb" stroke="#3b3a39" stroke-width="1.3"/><rect x="7" y="2" width="8.5" height="6.4" fill="#7ab8f0" stroke="#2b7fd0" stroke-width="1.3"/><rect x="1.5" y="12.7" width="8" height="5.8" fill="#fbfbfb" stroke="#3b3a39" stroke-width="1.3"/><rect x="9.5" y="12.7" width="11" height="5.8" fill="#bdbbb9" stroke="#8a8886" stroke-width="1.3"/></svg>
<svg class="r" style="left:49.799999999999955px;top:142.39999999999998px;" width="24" height="24" viewBox="0 0 24 24"><path d="M0.700 0v21.600h22.300" fill="none" stroke="#3b3a39" stroke-width="1.4" /><rect x="4" y="14.8" width="6" height="6.8" fill="#fbfbfb" stroke="#3b3a39" stroke-width="1.3"/><rect x="4" y="6.5" width="6" height="8.3" fill="#7ab8f0" stroke="#2b7fd0" stroke-width="1.3"/><rect x="14.4" y="13.6" width="5.8" height="8" fill="#fbfbfb" stroke="#3b3a39" stroke-width="1.3"/><rect x="14.4" y="2.7" width="5.8" height="10.9" fill="#bdbbb9" stroke="#8a8886" stroke-width="1.3"/></svg>
<svg class="r" style="left:84.70000000000005px;top:142.39999999999998px;" width="24" height="24" viewBox="0 0 24 24"><path d="M0.700 0v21.600h22.300" fill="none" stroke="#3b3a39" stroke-width="1.4" /><rect x="1" y="1" width="20.5" height="5" fill="#7ab8f0" stroke="#2b7fd0" stroke-width="1.3"/><rect x="1" y="6.3" width="13" height="4" fill="#fbfbfb" stroke="#3b3a39" stroke-width="1.3"/><rect x="1" y="10.3" width="9.5" height="5" fill="#bdbbb9" stroke="#8a8886" stroke-width="1.3"/><rect x="1" y="15.6" width="15.5" height="4.6" fill="#fbfbfb" stroke="#3b3a39" stroke-width="1.3"/></svg>
<svg class="r" style="left:119.70000000000005px;top:142.39999999999998px;" width="24" height="24" viewBox="0 0 24 24"><path d="M0.700 0v21.600h22.300" fill="none" stroke="#3b3a39" stroke-width="1.4" /><rect x="2" y="1.5" width="4.5" height="20.1" fill="#7ab8f0" stroke="#2b7fd0" stroke-width="1.3"/><rect x="6.5" y="9.5" width="4.5" height="12.1" fill="#fbfbfb" stroke="#3b3a39" stroke-width="1.3"/><rect x="11" y="12" width="5" height="9.6" fill="#bdbbb9" stroke="#8a8886" stroke-width="1.3"/><rect x="16" y="6.5" width="5" height="15.1" fill="#fbfbfb" stroke="#3b3a39" stroke-width="1.3"/></svg>
<svg class="r" style="left:154.5999999999999px;top:142.39999999999998px;" width="24" height="24" viewBox="0 0 24 24"><path d="M0.700 0v21.600h22.300" fill="none" stroke="#3b3a39" stroke-width="1.4" /><rect x="1.5" y="2" width="3.5" height="6.4" fill="#fbfbfb" stroke="#3b3a39" stroke-width="1.3"/><rect x="5" y="2" width="15" height="6.4" fill="#7ab8f0" stroke="#2b7fd0" stroke-width="1.3"/><rect x="1.5" y="12.7" width="11.5" height="5.8" fill="#fbfbfb" stroke="#3b3a39" stroke-width="1.3"/><rect x="13" y="12.7" width="7" height="5.8" fill="#bdbbb9" stroke="#8a8886" stroke-width="1.3"/></svg>
<svg class="r" style="left:189.5999999999999px;top:142.39999999999998px;" width="24" height="24" viewBox="0 0 24 24"><path d="M0.700 0v21.600h22.300" fill="none" stroke="#3b3a39" stroke-width="1.4" /><rect x="4" y="17.5" width="6" height="4.1" fill="#fbfbfb" stroke="#3b3a39" stroke-width="1.3"/><rect x="4" y="2.7" width="6" height="14.8" fill="#7ab8f0" stroke="#2b7fd0" stroke-width="1.3"/><rect x="14.4" y="9.5" width="5.8" height="12.1" fill="#fbfbfb" stroke="#3b3a39" stroke-width="1.3"/><rect x="14.4" y="2.7" width="5.8" height="6.8" fill="#bdbbb9" stroke="#8a8886" stroke-width="1.3"/></svg>
<svg class="r" style="left:14.799999999999955px;top:177.39999999999998px;" width="24" height="24" viewBox="0 0 24 24"><path d="M0.700 0v21.600h22.300" fill="none" stroke="#3b3a39" stroke-width="1.4" /><path d="M0.700 15.600l6.200-9.800l8.100 6.300l7.200-7.500" fill="none" stroke="#3b3a39" stroke-width="1.4" /><path d="M0.700 18.500l13.700-14.500l7.800 7.500" fill="none" stroke="#2b7fd0" stroke-width="1.4" /></svg>
<svg class="r" style="left:49.799999999999955px;top:177.39999999999998px;" width="24" height="24" viewBox="0 0 24 24"><path d="M11 12l6.300-11.400l5.200 11v10.400z" fill="#bdbbb9" stroke="#8a8886" stroke-width="1"/><path d="M0 13.300l7.200-11.600l7.800 11.300" fill="#fbfbfb" stroke="#3b3a39" stroke-width="1.300"/><path d="M0 14.400l6.400 4.100l6.900-8.100l9.200 11.600h-22.500z" fill="#7ab8f0" stroke="#2b7fd0" stroke-width="1.300" stroke-linejoin="round"/></svg>
<svg class="r" style="left:84.70000000000005px;top:177.39999999999998px;" width="24" height="24" viewBox="0 0 24 24"><path d="M0.700 0v21.600h22.300" fill="none" stroke="#3b3a39" stroke-width="1.4" /><path d="M0.800 2.900l6.400 7.500l8.600-8.100l3.500 4.600h3.100v11l-6.600-6.700l-8.600 6.900l-6.400-6.200z" fill="#7ab8f0" stroke="#2b7fd0" stroke-width="1.500"/></svg>
<svg class="r" style="left:119.70000000000005px;top:177.39999999999998px;" width="24" height="24" viewBox="0 0 24 24"><path d="M0.700 0v21.600h22.300" fill="none" stroke="#3b3a39" stroke-width="1.4" /><path d="M0.900 2.300h21.400v15.600l-7.500-7.500l-7.500 7.500l-6.400-5.800z" fill="#7ab8f0" stroke="#2b7fd0" stroke-width="1.500"/></svg>
<svg class="r" style="left:154.5999999999999px;top:177.39999999999998px;" width="24" height="24" viewBox="0 0 24 24"><path d="M0.700 0v21.600h22.300" fill="none" stroke="#3b3a39" stroke-width="1.4" /><rect x="4" y="2.5" width="5.5" height="14.5" fill="#7ab8f0" stroke="#2b7fd0" stroke-width="1.3"/><rect x="4" y="17" width="5.5" height="4.6" fill="#fbfbfb" stroke="#3b3a39" stroke-width="1.3"/><rect x="14" y="8.5" width="6" height="13.1" fill="#fbfbfb" stroke="#3b3a39" stroke-width="1.3"/><rect x="14" y="2.5" width="6" height="6" fill="#bdbbb9" stroke="#8a8886" stroke-width="1.3"/><path d="M1 21l7-9l6 6l8-9.500" fill="none" stroke="#3b3a39" stroke-width="1.5" /></svg>
<svg class="r" style="left:189.5999999999999px;top:177.39999999999998px;" width="24" height="24" viewBox="0 0 24 24"><path d="M0.700 0v21.600h22.300" fill="none" stroke="#3b3a39" stroke-width="1.4" /><rect x="9.5" y="1.5" width="5.5" height="20.1" fill="#fbfbfb" stroke="#3b3a39" stroke-width="1.3"/><rect x="3.5" y="10" width="6" height="11.6" fill="#7ab8f0" stroke="#2b7fd0" stroke-width="1.3"/><rect x="15" y="6.5" width="5.5" height="15.1" fill="#bdbbb9" stroke="#8a8886" stroke-width="1.3"/><path d="M1 21l7-9l6 5l8-9" fill="none" stroke="#3b3a39" stroke-width="1.5" /></svg>
<svg class="r" style="left:14.799999999999955px;top:212.3px;" width="24" height="24" viewBox="0 0 24 24"><path d="M1.500 4.500c5 1 6 4.500 10 4.500s5-4 10-5.500v5c-5 1.500-6 5-10 5s-5-3-10-4.500z" fill="#bdbbb9" stroke="#8a8886" stroke-width="1"/><rect x="1.500" y="13.500" width="5" height="5.500" fill="#f0a33a"/><rect x="16.500" y="13" width="5" height="6" fill="#f0a33a"/><rect x="8" y="10.500" width="6" height="3" fill="#f0a33a"/><path d="M1.500 9.500c4 0 5 7.500 10 7.500s6-7.500 10-7.500v4.500c-4 0-5 6-10 6s-6-6-10-6z" fill="#7ab8f0" stroke="#2b7fd0" stroke-width="1.400"/><path d="M0.700 0v21.600h22.300" fill="none" stroke="#3b3a39" stroke-width="1.4" /></svg>
<svg class="r" style="left:49.799999999999955px;top:212.3px;" width="24" height="24" viewBox="0 0 24 24"><path d="M0.700 0v21.600h22.300" fill="none" stroke="#3b3a39" stroke-width="1.4" /><rect x="3" y="7" width="4" height="14.6" fill="#fbfbfb" stroke="#3b3a39" stroke-width="1.3"/><rect x="7" y="5.5" width="3.5" height="16.1" fill="#fbfbfb" stroke="#3b3a39" stroke-width="1.3"/><rect x="10.2" y="6" width="3.4" height="7" fill="#8a8886" stroke="#3b3a39" stroke-width="1.3"/><rect x="13.3" y="1.5" width="3.5" height="11.5" fill="#7ab8f0" stroke="#2b7fd0" stroke-width="1.3"/><rect x="17" y="1.5" width="4" height="20.1" fill="#fbfbfb" stroke="#3b3a39" stroke-width="1.3"/></svg>
<svg class="r" style="left:84.70000000000005px;top:212.3px;" width="24" height="24" viewBox="0 0 24 24"><rect x="0.7" y="1" width="22" height="6.5" fill="#7ab8f0" stroke="#2b7fd0" stroke-width="1.5"/><rect x="2.6" y="7.5" width="18.2" height="7.3" fill="#7ab8f0" stroke="#2b7fd0" stroke-width="1.5"/><rect x="6.6" y="14.8" width="10.2" height="6.8" fill="#7ab8f0" stroke="#2b7fd0" stroke-width="1.5"/></svg>
<svg class="r" style="left:119.70000000000005px;top:212.3px;" width="24" height="24" viewBox="0 0 24 24"><path d="M0.700 0v21.600h22.300" fill="none" stroke="#3b3a39" stroke-width="1.4" /><rect x="4" y="5" width="3.600" height="3.600" fill="#7ab8f0"/><rect x="10.200" y="9.300" width="3.600" height="3.600" fill="#7ab8f0"/><rect x="16" y="14" width="3.600" height="3.600" fill="#7ab8f0"/><rect x="16.200" y="1.200" width="4.200" height="4.200" fill="#3b3a39"/><rect x="3.700" y="14.800" width="4.200" height="4.200" fill="#3b3a39"/></svg>
<svg class="r" style="left:154.5999999999999px;top:212.3px;" width="24" height="24" viewBox="0 0 24 24"><circle cx="11.300" cy="11.200" r="10.300" fill="#fbfbfb" stroke="#3b3a39" stroke-width="1.500"/><path d="M11.300 11.200v-10.300a10.300 10.300 0 0 1 7.700 17.100z" fill="#7ab8f0" stroke="#2b7fd0" stroke-width="1.500" stroke-linejoin="round"/></svg>
<svg class="r" style="left:189.5999999999999px;top:212.3px;" width="24" height="24" viewBox="0 0 24 24"><circle cx="11.300" cy="11.200" r="7.700" fill="none" stroke="#7ab8f0" stroke-width="5"/><circle cx="11.300" cy="11.200" r="10.300" fill="none" stroke="#2b7fd0" stroke-width="1.400"/><circle cx="11.300" cy="11.200" r="5" fill="#fbfbfb" stroke="#2b7fd0" stroke-width="1.400"/><path d="M11.300 0.900a10.300 10.300 0 0 0 -9.800 7.200l4.900 1.500a5.200 5.200 0 0 1 4.900 -3.600z" fill="#fbfbfb" stroke="#2b7fd0" stroke-width="1.200"/></svg>
<svg class="r" style="left:14.799999999999955px;top:247.3px;" width="24" height="24" viewBox="0 0 24 24"><rect x="0.7" y="0.7" width="21.8" height="21.6" fill="#7ab8f0" stroke="#2b7fd0" stroke-width="1.5"/><rect x="11.5" y="0.7" width="11" height="21.6" fill="#fbfbfb" stroke="#3b3a39" stroke-width="1.3"/><path d="M0.700 12h10.800" fill="none" stroke="#2b7fd0" stroke-width="1.5" /><path d="M11.500 7.500h11M15.500 7.500v14.800M15.500 14.500h7" fill="none" stroke="#3b3a39" stroke-width="1.3" /></svg>
<svg class="r" style="left:49.799999999999955px;top:247.3px;" width="24" height="24" viewBox="0 0 24 24"><circle cx="11" cy="10" r="7.600" fill="#fbfbfb" stroke="#3b3a39" stroke-width="1.400"/><path d="M7 5.500c2-1 3 0 3.500 1.500s-1.500 3-3 2.500s-1.500-3-.5-4zM12.500 4c2 0 4 1.500 4.500 3.500c-1.500 1-3.500 0-4-1.500zM9 12.500c2-1 5-.5 6 1c-.5 2-2.500 3-4.500 3c-1-1-1.500-2.500-1.500-4z" fill="#3a9d53"/><path d="M9 0.800a10.300 10.300 0 0 0 2 19.500a10 10 0 0 0 6-2" fill="none" stroke="#3b3a39" stroke-width="1.300"/><path d="M11 20.300v2M4.500 22.300h13" stroke="#3b3a39" stroke-width="1.400"/></svg>
<svg class="r" style="left:84.70000000000005px;top:247.3px;" width="24" height="24" viewBox="0 0 24 24"><path d="M1 2l5.500 .5l3 3.500l3.500-1l2-3.500h7.500v12l-3.500 5.500l-5.500 1.500l-3.500 1.500l-5.500-3l-3-5.500l1.500-4z" fill="#bdbbb9" stroke="#3b3a39" stroke-width="1.300" stroke-linejoin="round"/><path d="M1 2l5.500 .5l3 3.500l1 4l-6 .5l-2-3z" fill="#7ab8f0" stroke="#2b7fd0" stroke-width="1.300" stroke-linejoin="round"/><path d="M12 16.500l2-4.500l4-2l4.500 .5v3l-3.500 5.500l-5.500 1.500z" fill="#7ab8f0" stroke="#2b7fd0" stroke-width="1.300" stroke-linejoin="round"/></svg>
<svg class="r" style="left:119.70000000000005px;top:247.3px;" width="24" height="24" viewBox="0 0 24 24"><path d="M13.500 -0.500l6.500 25l-7.500-6.500l-10.500 3z" fill="#2f8fe0"/><path d="M13.500 -0.500l6.500 25l-7.500-6.500z" fill="#1f6fc0"/></svg>
<svg class="r" style="left:154.5999999999999px;top:247.3px;" width="24" height="24" viewBox="0 0 24 24"><path d="M0.800 16.500a10.800 10.800 0 0 1 21.600 0h-4.800a6 6 0 0 0 -12 0z" fill="#fbfbfb" stroke="#3b3a39" stroke-width="1.400" stroke-linejoin="round"/><path d="M8 6.300a10.800 10.800 0 0 1 14.400 10.200h-4.800a6 6 0 0 0 -7.800-5.700z" fill="#7ab8f0" stroke="#2b7fd0" stroke-width="1.400" stroke-linejoin="round"/><path d="M11.600 15.500l3.500-4" stroke="#3b3a39" stroke-width="1.800"/><circle cx="11.600" cy="15.500" r="1.500" fill="#3b3a39"/></svg>
<svg class="r" style="left:189.5999999999999px;top:247.3px;" width="24" height="24" viewBox="0 0 24 24"><rect x="0.7" y="3.2" width="21.8" height="16.3" fill="#fbfbfb" stroke="#3b3a39" stroke-width="1.5"/><path d="M3.500 16.200h16" fill="none" stroke="#8a8886" stroke-width="1.2" /><text x="11.600" y="13.800" font-size="9.500" text-anchor="middle" fill="#2b88d8" font-family="Liberation Sans,sans-serif" textLength="15.500" lengthAdjust="spacingAndGlyphs">123</text></svg>
<svg class="r" style="left:14.799999999999955px;top:282.2px;" width="24" height="24" viewBox="0 0 24 24"><rect x="0.7" y="0.7" width="21.8" height="21.6" fill="#fbfbfb" stroke="#3b3a39" stroke-width="1.5"/><path d="M5 4.500v13.500" fill="none" stroke="#8a8886" stroke-width="1.2" /><path d="M7 6h11.500M7 13.500h11.500" fill="none" stroke="#2b7fd0" stroke-width="1.8" /><path d="M7 9.500h6.500M7 17h5" fill="none" stroke="#8a8886" stroke-width="1.3" /></svg>
<svg class="r" style="left:49.799999999999955px;top:282.2px;" width="24" height="24" viewBox="0 0 24 24"><rect x="0.7" y="1.5" width="21.8" height="17.8" fill="#fbfbfb" stroke="#3b3a39" stroke-width="1.5"/><path d="M3.500 12l3.500-6.500l3.500 6.500z" fill="#4aa564" stroke="#2e8a4a" stroke-width="0.800"/><path d="M12.500 5.500h7l-3.500 6.500z" fill="#e0434b" stroke="#c22f38" stroke-width="0.800"/><path d="M3.500 15.200h16" fill="none" stroke="#8a8886" stroke-width="1.2" /></svg>
<svg class="r" style="left:84.70000000000005px;top:282.2px;" width="24" height="24" viewBox="0 0 24 24"><path d="M22.300 11v-10.300h-21.600v21h12" fill="#fbfbfb" stroke="#3b3a39" stroke-width="1.400"/><rect x="0.700" y="0.700" width="21.600" height="3.300" fill="#bdbbb9" stroke="#3b3a39" stroke-width="1.200"/><rect x="4.500" y="8" width="3.600" height="3.600" fill="#bdbbb9" stroke="#8a8886" stroke-width="1"/><rect x="4.500" y="14.500" width="3.600" height="3.600" fill="#bdbbb9" stroke="#8a8886" stroke-width="1"/><path d="M11.5 11.3h11.500l-4 4.800v6h-3.500v-6z" fill="#fbfbfb" stroke="#3b3a39" stroke-width="1.400" stroke-linejoin="miter"/></svg>
<svg class="r" style="left:119.70000000000005px;top:282.2px;" width="24" height="24" viewBox="0 0 24 24"><rect x="0.7" y="0.7" width="21.6" height="21" fill="#fbfbfb" stroke="#3b3a39" stroke-width="1.3"/><rect x="0.700" y="0.700" width="21.600" height="3.300" fill="#bdbbb9" stroke="#3b3a39" stroke-width="1.200"/><path d="M7.900 4v17.700M15.100 4v17.700" fill="none" stroke="#3b3a39" stroke-width="1.2" /><path d="M0.700 9.900h21.600M0.700 15.800h21.600" fill="none" stroke="#8a8886" stroke-width="1.2" /><rect x="0.700" y="0.700" width="21.600" height="21" fill="none" stroke="#3b3a39" stroke-width="1.400"/></svg>
<svg class="r" style="left:154.5999999999999px;top:282.2px;" width="24" height="24" viewBox="0 0 24 24"><rect x="0.7" y="0.7" width="21.6" height="21" fill="#fbfbfb" stroke="#3b3a39" stroke-width="1.3"/><rect x="0.700" y="0.700" width="21.600" height="3.300" fill="#bdbbb9" stroke="#3b3a39" stroke-width="1.200"/><rect x="15" y="4" width="7.300" height="17.700" fill="#7ab8f0"/><rect x="0.700" y="15.800" width="21.600" height="5.900" fill="#7ab8f0"/><path d="M7.900 4v17.700M15.100 4v17.700" fill="none" stroke="#3b3a39" stroke-width="1.2" /><path d="M0.700 9.900h21.600M0.700 15.800h21.600" fill="none" stroke="#d8ecfb" stroke-width="1.2" /><rect x="0.700" y="0.700" width="21.600" height="21" fill="none" stroke="#3b3a39" stroke-width="1.400"/></svg>
<svg class="r" style="left:189.5999999999999px;top:282.2px;" width="24" height="24" viewBox="0 0 24 24"><text x="11.500" y="18.300" font-size="19" font-weight="700" text-anchor="middle" fill="#2b7fd0" font-family="Liberation Sans,sans-serif">R</text></svg>
<svg class="r" style="left:14.799999999999955px;top:317.1px;" width="24" height="24" viewBox="0 0 24 24"><text x="11.500" y="15.500" font-size="19.500" font-weight="700" text-anchor="middle" fill="#2b7fd0" font-family="Liberation Sans,sans-serif" textLength="23.500" lengthAdjust="spacingAndGlyphs">Py</text></svg>
<svg class="r" style="left:49.799999999999955px;top:317.1px;" width="24" height="24" viewBox="0 0 24 24"><path d="M0.700 0v21.600h22.300" fill="none" stroke="#3b3a39" stroke-width="1.4" /><path d="M0.700 4.500h14.500" fill="none" stroke="#2b7fd0" stroke-width="1.3" /><circle cx="18" cy="4.500" r="3" fill="#7ab8f0" stroke="#2b7fd0" stroke-width="1.300"/><path d="M0.700 10.800h11M0.700 15.800h6.500" fill="none" stroke="#8a8886" stroke-width="1.3" /><rect x="11.500" y="9.300" width="3" height="3" fill="#bdbbb9" stroke="#8a8886" stroke-width="1"/><rect x="7.200" y="14.300" width="3" height="3" fill="#bdbbb9" stroke="#8a8886" stroke-width="1"/></svg>
<svg class="r" style="left:84.70000000000005px;top:317.1px;" width="24" height="24" viewBox="0 0 24 24"><path d="M8 10.800h4M12 3.500v15M12 3.500h3M12 10.800h3M12 18.500h3" fill="none" stroke="#3b3a39" stroke-width="1.4" /><rect x="0.5" y="8" width="7.5" height="5.6" fill="#7ab8f0" stroke="#2b7fd0" stroke-width="1.4"/><rect x="14.8" y="0.7" width="7.5" height="5.6" fill="#7ab8f0" stroke="#2b7fd0" stroke-width="1.4"/><rect x="14.8" y="8" width="7.5" height="5.6" fill="#7ab8f0" stroke="#2b7fd0" stroke-width="1.4"/><rect x="14.8" y="15.5" width="7.5" height="5.6" fill="#7ab8f0" stroke="#2b7fd0" stroke-width="1.4"/></svg>
<svg class="r" style="left:119.70000000000005px;top:317.1px;" width="24" height="24" viewBox="0 0 24 24"><path d="M0.900 1.500h21.500v14h-13.500l-4.300 5v-5h-3.700z" fill="#fbfbfb" stroke="#2b7fd0" stroke-width="1.600" stroke-linejoin="miter"/></svg>
<svg class="r" style="left:154.5999999999999px;top:317.1px;" width="24" height="24" viewBox="0 0 24 24"><path d="M2.500 5.500v-4.800h10.500l6.500 6.500v14.500h-17v-9.500M13 0.700v6.500h6.500" fill="#fbfbfb" stroke="#3b3a39" stroke-width="1.400"/><circle cx="2.800" cy="8.800" r="2.200" fill="#7ab8f0" stroke="#2b7fd0" stroke-width="1.200"/><path d="M7 10.500h8M7 14.500h6.500" fill="none" stroke="#2b7fd0" stroke-width="1.4" /></svg>
<svg class="r" style="left:189.5999999999999px;top:317.1px;" width="24" height="24" viewBox="0 0 24 24"><path d="M4.500 1.800h14v6.500a7 7 0 0 1 -14 0z" fill="#fbfbfb" stroke="#3b3a39" stroke-width="1.500"/><path d="M4.500 3.500h-3.500v2.500a4.500 4.500 0 0 0 4.500 4.500M18.500 3.500h3.500v2.500a4.500 4.500 0 0 1 -4.500 4.500" fill="none" stroke="#3b3a39" stroke-width="1.400"/><path d="M4.500 1.800h14v2.400h-14z" fill="#7ab8f0" stroke="#2b7fd0" stroke-width="1.200"/><path d="M10 14.500l-2.500 4.500h8l-2.500-4.500" fill="#fbfbfb" stroke="#3b3a39" stroke-width="1.300"/><rect x="5.500" y="19" width="12" height="2.800" fill="#7ab8f0" stroke="#2b7fd0" stroke-width="1.300"/></svg>
<svg class="r" style="left:14.799999999999955px;top:352.1px;" width="24" height="24" viewBox="0 0 24 24"><path d="M2.500 0.700h10.500l6.500 6.500v15h-17zM13 0.700v6.500h6.500" fill="#fbfbfb" stroke="#3b3a39" stroke-width="1.500"/><rect x="5.500" y="13" width="2.800" height="6.500" fill="#3b3a39"/><rect x="10" y="16" width="2.800" height="3.500" fill="#3b3a39"/><rect x="14.500" y="10.500" width="2.800" height="9" fill="#3b3a39"/></svg>
<svg class="r" style="left:49.799999999999955px;top:352.1px;" width="24" height="24" viewBox="0 0 24 24"><rect x="2" y="3.5" width="20.5" height="16" fill="#fbfbfb" stroke="#3b3a39" stroke-width="1.5"/><path d="M4.500 16.500h15.500" fill="none" stroke="#8a8886" stroke-width="1.2" /><text x="13.500" y="14.300" font-size="9.500" text-anchor="middle" fill="#2b88d8" font-family="Liberation Sans,sans-serif" textLength="14.500" lengthAdjust="spacingAndGlyphs">123</text><path d="M6.0 0l-5 8h3.200l-3 7l8-9.300h-3.400l4.500-5.700z" fill="#f5b73a" stroke="#e0821e" stroke-width="0.900" stroke-linejoin="round"/></svg>
<svg class="r" style="left:84.70000000000005px;top:352.1px;" width="24" height="24" viewBox="0 0 24 24"><rect x="1.5" y="12.5" width="9" height="8.5" fill="#fbfbfb" stroke="#8a8886" stroke-width="1.2"/><rect x="13" y="1" width="9" height="8.5" fill="#fbfbfb" stroke="#8a8886" stroke-width="1.2"/><rect x="6" y="4" width="5" height="7.5" fill="#7ab8f0" stroke="#2b7fd0" stroke-width="1.2"/><path d="M11.5 11.3h11.500l-4 4.800v6h-3.500v-6z" fill="#fbfbfb" stroke="#3b3a39" stroke-width="1.400" stroke-linejoin="miter"/><path d="M6.0 0l-5 8h3.200l-3 7l8-9.300h-3.400l4.500-5.700z" fill="#f5b73a" stroke="#e0821e" stroke-width="0.900" stroke-linejoin="round"/></svg>
<svg class="r" style="left:119.70000000000005px;top:352.1px;" width="24" height="24" viewBox="0 0 24 24"><path d="M22 10.500v-9.500h-20v19.500h10" fill="#fbfbfb" stroke="#3b3a39" stroke-width="1.400"/><path d="M7 14l4.500-10.500l4.500 10.500M8.500 10.500h6" fill="none" stroke="#2b88d8" stroke-width="1.200"/><path d="M11.5 11.3h11.500l-4 4.800v6h-3.500v-6z" fill="#fbfbfb" stroke="#3b3a39" stroke-width="1.400" stroke-linejoin="miter"/><path d="M6.0 0l-5 8h3.200l-3 7l8-9.300h-3.400l4.500-5.700z" fill="#f5b73a" stroke="#e0821e" stroke-width="0.900" stroke-linejoin="round"/></svg>
<svg class="r" style="left:154.5999999999999px;top:352.1px;" width="24" height="24" viewBox="0 0 24 24"><path d="M22 10.500v-9.500h-20v19.500h10" fill="#fbfbfb" stroke="#3b3a39" stroke-width="1.400"/><path d="M9.500 6.500h9.500" fill="none" stroke="#8a8886" stroke-width="1.3" /><rect x="4.500" y="12.500" width="3" height="3" fill="#bdbbb9" stroke="#8a8886" stroke-width="1"/><path d="M8 14h3" fill="none" stroke="#8a8886" stroke-width="1" /><path d="M11.5 11.3h11.500l-4 4.800v6h-3.500v-6z" fill="#fbfbfb" stroke="#3b3a39" stroke-width="1.400" stroke-linejoin="miter"/><path d="M6.0 0l-5 8h3.200l-3 7l8-9.300h-3.400l4.500-5.700z" fill="#f5b73a" stroke="#e0821e" stroke-width="0.900" stroke-linejoin="round"/></svg>
<svg class="r" style="left:189.5999999999999px;top:352.1px;" width="24" height="24" viewBox="0 0 24 24"><rect x="1.600" y="1.600" width="20.300" height="19.800" fill="#fbfbfb" stroke="#2b7fd0" stroke-width="2.400"/><path d="M3 20l1-4.500l6.500-1.500l2-6l4.500-2l1-3h3v4l-3 2l-1.500 5.500l-5 2.500l-1.500 3.500z" fill="#7ab8f0" stroke="#2b7fd0" stroke-width="0.800"/><path d="M0.500 0.500h7v6l-3.500 4.500l-3.500-4.500z" fill="#e0701a"/><circle cx="4" cy="4" r="1.500" fill="#fff"/><circle cx="20" cy="20.500" r="3.300" fill="#e0701a"/><circle cx="22" cy="13.500" r="2" fill="#e0701a"/></svg>
<svg class="r" style="left:14.799999999999955px;top:387.0px;" width="24" height="24" viewBox="0 0 24 24"><path d="M11.500 1l10.500 10.500l-10.500 10.500l-10.500-10.500z" fill="none" stroke="#a23bb8" stroke-width="1.500" stroke-linejoin="round"/><path d="M7.500 5.500l9.500 9.500M16 5.500l-9.500 9.500M6 16l4 4.500" fill="none" stroke="#a23bb8" stroke-width="1.500"/><path d="M14 1.500l3.500 3.500" stroke="#a23bb8" stroke-width="1.500"/></svg>
<svg class="r" style="left:49.799999999999955px;top:387.0px;" width="24" height="24" viewBox="0 0 24 24"><path d="M1 2h14l7 9.500l-7 9.500h-14l7-9.500z" fill="none" stroke="#1f7be0" stroke-width="1.600" stroke-linejoin="round"/><path d="M15.500 5l-12 16M19 9l-9 12" stroke="#1f7be0" stroke-width="1.500"/></svg>
<svg class="r" style="left:84.70000000000005px;top:387.0px;" width="24" height="24" viewBox="0 0 24 24"><path d="M8 9l3.500-7l3.500 7v9h-7z" fill="#f3b6b9"/><path d="M9 7l6 7" stroke="#fff" stroke-width="1.200"/><ellipse cx="11.500" cy="18.500" rx="6" ry="3.300" fill="#9fbfe0"/><rect x="9" y="15" width="5" height="3" fill="#f7d2d4"/></svg>
<svg class="r" style="left:119.70000000000005px;top:387.0px;" width="24" height="24" viewBox="0 0 24 24"><rect x="0" y="0" width="22" height="22" fill="#fff"/><rect x="1.500" y="16" width="4.500" height="5" fill="#e23b3b"/><rect x="8.500" y="9.500" width="5" height="11.500" fill="#f0b429"/><rect x="15.500" y="1.500" width="5" height="19.500" fill="#5bb55b"/><path d="M3 11.500h6l9-6.500" fill="none" stroke="#555" stroke-width="1" stroke-dasharray="2 1"/><circle cx="3.500" cy="11.500" r="1.200" fill="#555"/><circle cx="10.500" cy="11" r="1.200" fill="#555"/><circle cx="18" cy="5" r="1.200" fill="#555"/></svg>
<svg class="r" style="left:154.5999999999999px;top:387.0px;" width="24" height="24" viewBox="0 0 24 24"><circle cx="4.500" cy="8.500" r="1.250" fill="#201f1e"/><circle cx="11.500" cy="8.500" r="1.250" fill="#201f1e"/><circle cx="18.500" cy="8.500" r="1.250" fill="#201f1e"/></svg>
<div class="r" style="left:1.0px;top:421px;width:224px;height:1px;background:#e1dfdd"></div>
<span class="t" style="left:15.60px;top:435.70px;font-size:14.3px;line-height:14.3px;color:#252423;transform:scaleX(0.9774);">Values</span>
<div class="r" style="left:5.5px;top:459.5px;width:213px;height:34px;border:1px dashed #c8c6c4;background:#fff"></div>
<span class="t" style="left:19.50px;top:469.70px;font-size:14.3px;line-height:14.3px;color:#252423;transform:scaleX(1.0409);">Add data fields here</span>
<span class="t" style="left:15.60px;top:510.50px;font-size:14.3px;line-height:14.3px;color:#252423;-webkit-text-stroke:0.46px #252423;transform:scaleX(1.1285);">Drill through</span>
<span class="t" style="left:15.60px;top:541.90px;font-size:14.3px;line-height:14.3px;color:#252423;transform:scaleX(1.0395);">Cross-report</span>
<div class="r" style="left:158.5px;top:539.5px;width:40px;height:20px;border:1px solid #605e5c;border-radius:10px;background:#fff"></div>
<div class="r" style="left:164.5px;top:544.5px;width:10px;height:10px;background:#605e5c;border-radius:5px"></div>
<span class="t" style="left:176.50px;top:544.41px;font-size:10.5px;line-height:10.5px;color:#605e5c;transform:scaleX(1.1150);">Off</span>
<span class="t" style="left:15.60px;top:575.50px;font-size:14.3px;line-height:14.3px;color:#252423;transform:scaleX(1.0243);">Keep all filters</span>
<div class="r" style="left:158.5px;top:573.3px;width:40px;height:20px;border-radius:10px;background:#117865"></div>
<div class="r" style="left:182.5px;top:578.3px;width:10px;height:10px;background:#fff;border-radius:5px"></div>
<span class="t" style="left:164.40px;top:578.31px;font-size:10.5px;line-height:10.5px;color:#fff;transform:scaleX(0.9781);">On</span>
<div class="r" style="left:5.5px;top:606.5px;width:213px;height:31px;border:1px dashed #c8c6c4;background:#fff"></div>
<span class="t" style="left:16.50px;top:615.00px;font-size:14.3px;line-height:14.3px;color:#252423;transform:scaleX(1.0767);">Add drill-through fields here</span>
</div>
<div class="r data" style="left:1694px;top:200px;width:211px;height:790px;background:#f3f2f1">
<span class="t" style="left:11.70px;top:15.66px;font-size:19.3px;line-height:19.3px;color:#201f1e;-webkit-text-stroke:0.62px #201f1e;transform:scaleX(1.0057);">Data</span>
<svg class="r" style="left:201px;top:16px;" width="16" height="15" viewBox="0 0 16 15"><path d="M1 1l6.500 6.500l-6.500 6.500M8 1l6.500 6.500l-6.500 6.500" fill="none" stroke="#252423" stroke-width="1.500"/></svg>
<div class="r" style="left:6.5px;top:57.5px;width:215px;height:29px;background:#fff;border:1px solid #e1dfdd;border-bottom:1px solid #8a8886;border-radius:3px"></div>
<svg class="r" style="left:21px;top:63px;" width="20" height="20" viewBox="0 0 20 20"><circle cx="8" cy="8" r="6.300" fill="none" stroke="#605e5c" stroke-width="1.300"/><path d="M12.500 12.500l6 6" stroke="#605e5c" stroke-width="1.400"/></svg>
<span class="t" style="left:48.60px;top:66.43px;font-size:16.5px;line-height:16.5px;color:#605e5c;transform:scaleX(0.9755);">Search</span>
<svg class="r" style="left:20px;top:106px;" width="10" height="15" viewBox="0 0 10 15"><path d="M1.500 1.500l6 6l-6 6" fill="none" stroke="#484644" stroke-width="1.300"/></svg>
<svg class="r" style="left:36px;top:105px;" width="18" height="17" viewBox="0 0 18 17"><g fill="none" stroke="#323130" stroke-width="1.300"><rect x="1" y="1" width="15.500" height="14.500" rx="2.500"/><path d="M1 5.800h15.500M1 10.600h15.500M6.200 1v14.500M11.300 1v14.500"/></g></svg>
<span class="t" style="left:59.90px;top:107.30px;font-size:14.3px;line-height:14.3px;color:#252423;transform:scaleX(0.9576);">Bike Sales</span>
</div>
<div class="r" style="left:0px;top:200px;width:51px;height:4px;background:linear-gradient(rgba(0,0,0,.10),rgba(0,0,0,0))"></div>
<div class="r" style="left:1217.4px;top:200px;width:687.6px;height:4px;background:linear-gradient(rgba(0,0,0,.10),rgba(0,0,0,0))"></div>
<div class="r pagetabs" style="left:0px;top:945.5px;width:1468.5px;height:44.5px;background:#f3f2f1">
<svg class="r" style="left:66px;top:10.5px;" width="26" height="17" viewBox="0 0 26 17"><rect x="0.700" y="0.700" width="23.600" height="12" fill="none" stroke="#484644" stroke-width="1.300"/><path d="M12.500 12.700v3M7.500 16h10" stroke="#484644" stroke-width="1.300"/></svg>
<div class="r" style="left:64.3px;top:35.0px;width:29.6px;height:2.5px;background:#117865;border-radius:1px"></div>
<svg class="r" style="left:124px;top:5.5px;" width="18" height="27" viewBox="0 0 18 27"><rect x="1" y="1" width="15.500" height="24.300" rx="2.500" fill="none" stroke="#605e5c" stroke-width="1.300"/><path d="M6.500 21h4.500" stroke="#605e5c" stroke-width="1.300"/></svg>
<svg class="r" style="left:167px;top:17.5px;" width="8" height="9" viewBox="0 0 8 9"><path d="M6 0.500v8l-5-4z" fill="#c8c6c4"/></svg>
<svg class="r" style="left:194px;top:17.5px;" width="8" height="9" viewBox="0 0 8 9"><path d="M1.500 0.500v8l5-4z" fill="#c8c6c4"/></svg>
<div class="r" style="left:210px;top:0.5px;width:1px;height:44px;background:#d2d0ce"></div>
<div class="r " style="left:211px;top:0.0px;width:93.5px;height:44.5px;background:#fff">
</div>
<div class="r" style="left:211px;top:40.0px;width:93.5px;height:3.5px;background:#117865"></div>
<span class="t" style="left:236.00px;top:15.90px;font-size:14.3px;line-height:14.3px;color:#201f1e;-webkit-text-stroke:0.46px #201f1e;transform:scaleX(0.9642);">Page 1</span>
<div class="r " style="left:305.5px;top:1.0px;width:48.3px;height:43px;background:#117865">
</div>
<svg class="r" style="left:322px;top:14.5px;" width="14" height="14" viewBox="0 0 14 14"><path d="M7 0.500v13M0.500 7h13" stroke="#fff" stroke-width="2.600"/></svg>
</div>
<div class="r status" style="left:0px;top:990px;width:1905px;height:29.5px;background:#f3f2f1;box-shadow:inset 0 1px 0 #e1dfdd">
<span class="t" style="left:5.10px;top:9.90px;font-size:14.3px;line-height:14.3px;color:#605e5c;">Page 1 of 1</span>
<span class="t" style="left:1655.50px;top:6.80px;font-size:15px;line-height:15px;color:#484644;">-</span>
<div class="r" style="left:1667.3px;top:14.299999999999955px;width:125px;height:1px;background:#605e5c"></div>
<div class="r" style="left:1729.3px;top:11.5px;width:1px;height:6.5px;background:#605e5c"></div>
<div class="r" style="left:1708.6px;top:9px;width:4.4px;height:13px;background:#605e5c"></div>
<svg class="r" style="left:1798px;top:9px;" width="12" height="12" viewBox="0 0 12 12"><path d="M6 0.500v11M0.500 6h11" stroke="#484644" stroke-width="1.300"/></svg>
<span class="t" style="left:1825.50px;top:7.70px;font-size:14.3px;line-height:14.3px;color:#605e5c;transform:scaleX(0.9783);">73%</span>
<svg class="r" style="left:1877px;top:7.5px;" width="22" height="16" viewBox="0 0 22 16"><rect x="0.800" y="0.800" width="19.800" height="14" rx="1.500" fill="none" stroke="#a19f9d" stroke-width="1.400"/><path d="M4 7v-3.200h3.500M17.500 7v-3.200h-3.500M4 8.800v3.200h3.500M17.500 8.800v3.200h-3.500" fill="none" stroke="#605e5c" stroke-width="1.300"/></svg>
<div class="r" style="left:0px;top:28px;width:1905px;height:1px;background:#fbfbfb"></div>
</div>
<div class="r taskbar" style="left:0px;top:1019px;width:1905px;height:51px;background:#1c1c1c;box-shadow:inset 0 1px 0 #0c0c0c">
<svg class="r" style="left:0px;top:0px;" width="1905" height="51" viewBox="0 0 1905 51"><defs><linearGradient id="wl" x1="0" y1="0" x2="1" y2="1"><stop offset="0" stop-color="#6fd3fb"/><stop offset="1" stop-color="#0a86e0"/></linearGradient></defs><rect x="475" y="16.59999999999991" width="13.800" height="13.800" rx="0.800" fill="url(#wl)"/><rect x="490.3" y="16.59999999999991" width="13.800" height="13.800" rx="0.800" fill="url(#wl)"/><rect x="475" y="31.90000000000009" width="13.800" height="13.800" rx="0.800" fill="url(#wl)"/><rect x="490.3" y="31.90000000000009" width="13.800" height="13.800" rx="0.800" fill="url(#wl)"/><rect x="521.200" y="10.599999999999909" width="275" height="44" rx="21" fill="#383838" stroke="#454545" stroke-width="1"/><circle cx="543.500" cy="29.700000000000045" r="6.600" fill="none" stroke="#f0f0f0" stroke-width="2"/><path d="M548.300 34.59999999999991l5 5" stroke="#f0f0f0" stroke-width="2.200" stroke-linecap="round"/><defs><linearGradient id="cr" x1="0" y1="0" x2="0" y2="1"><stop offset="0" stop-color="#5148c8"/><stop offset="1" stop-color="#c7a3ea"/></linearGradient></defs><path d="M735.700 27v9c0 6.500 10.500 11.500 23.700 11.500s23.700-5 23.700-11.500v-9z" fill="url(#cr)"/><ellipse cx="759.400" cy="27" rx="23.700" ry="10.500" fill="#f6e9f2"/><ellipse cx="759.400" cy="31.5" rx="19.500" ry="6.300" fill="#4a45a8"/><g fill="#23238f"><path d="M741 26.5l2-2.500l3 .5l1.500-1.500l.5 2l-1.500 1.500l.5 2.500h-1.200l-.8-2l-2 .5l-.5 2h-1.200z"/><path d="M755.500 22.5l2-2.500l3 .5l1.500-1.500l.5 2l-1.500 1.500l.5 2.500h-1.200l-.8-2l-2 .5l-.5 2h-1.200z"/><path d="M770 25.5l2-2.500l3 .5l1.500-1.500l.5 2l-1.500 1.500l.5 2.500h-1.200l-.8-2l-2 .5l-.5 2h-1.200z"/></g><g stroke="#efe6f8" stroke-width="0.700" opacity=".8"><path d="M742 33v9M750 36v9M759.400 37v9.500M769 36v9M777 33v9"/></g><rect x="811" y="25" width="22" height="19.500" rx="1.500" fill="#8a8a8a"/><rect x="818.400" y="17.299999999999955" width="22.600" height="20.300" rx="1.500" fill="#f2f2f2"/><path d="M881.200 15l6 1.500l3 -1l4.500 6.500l-1.500 4l1 3.500l-4 10l-9 6.200l-9-6.200l-4-10l1-3.500l-1.500-4l4.500-6.500l3 1z" fill="#f1562b"/><path d="M881.200 21l5 1.500l2.500 4l-2 5l-5.500 5l-5.500-5l-2-5l2.500-4z" fill="#fff" opacity=".92"/><path d="M881.200 27l3 3l-3 3.500l-3-3.500z" fill="#f1562b"/><path d="M921 21a2 2 0 0 1 2-2h8.500l3.500 3.500h14a2 2 0 0 1 2 2v17.500h-30z" fill="#f7b928"/><rect x="921" y="26" width="30.200" height="17" rx="2" fill="#ffd75e"/><path d="M921 37h30.200v5.500a2 2 0 0 1 -2 2h-26.200a2 2 0 0 1 -2-2z" fill="#2a7fd6"/><rect x="930" y="35" width="12" height="4.500" rx="1" fill="#1a5fb4"/><circle cx="991" cy="30.700000000000045" r="14" fill="#3a36e0"/><rect x="982" y="24.5" width="18" height="12.500" rx="1.500" fill="none" stroke="#dfe0ff" stroke-width="1.300"/><path d="M987 39.5h8M988.500 21l2.500 3l2.500-3" stroke="#dfe0ff" stroke-width="1.200" fill="none"/><circle cx="1053" cy="22" r="3.600" fill="#7b83eb"/><circle cx="1042.500" cy="20.5" r="4.600" fill="#7b83eb"/><path d="M1046 27h12.500v9.500a6 6 0 0 1 -12 1z" fill="#5b5fc7"/><path d="M1036 27h14.500v11a7.200 7.200 0 0 1 -14.500 0z" fill="#7b83eb"/><rect x="1032.500" y="27.5" width="13" height="13" rx="1.500" fill="#4b53bc"/><path d="M1036 31h6M1039 31v7" stroke="#fff" stroke-width="1.500"/><path d="M1090.08 34.53A11.2 11.2 0 0 1 1098.66 19.67" fill="none" stroke="#2f8ef2" stroke-width="8.5"/><path d="M1102.54 19.67A11.2 11.2 0 0 1 1111.12 34.53" fill="none" stroke="#5ab2f8" stroke-width="8.5"/><path d="M1109.18 37.90A11.2 11.2 0 0 1 1092.02 37.90" fill="none" stroke="#1f4fdc" stroke-width="8.5"/><circle cx="1156" cy="30.700000000000045" r="13.500" fill="#2aa3e0"/><path d="M1148.500 30.5l14.500-6l-2.500 13l-4.500-3.200l-2.300 2.300l-.4-3.800l6.500-6l-8 5z" fill="#fff"/><circle cx="1167.600" cy="20.799999999999955" r="9.300" fill="#e8323c"/><path d="M1211 16a14.500 14.500 0 1 1 -7.200 27l-7 2l2-6.800a14.500 14.500 0 0 1 12.200 -22.200z" fill="none" stroke="#25d366" stroke-width="2.600"/><path d="M1205.500 23.5c-1.500 1-1.800 3-.5 5.500c1.800 3.500 4.500 6 8 7.500c2.300 1 4 .2 4.800-1.500l-3.300-2.300l-1.800 1.300c-2-1-3.700-2.700-4.700-4.700l1.300-1.800z" fill="#25d366"/><circle cx="1265.800" cy="30.59999999999991" r="14.300" fill="#1ed760"/><g fill="none" stroke="#111" stroke-linecap="round"><path d="M1257 25.5c6-1.800 12.500-1.200 18 1.800" stroke-width="2.700"/><path d="M1258 30.5c5-1.500 10.500-1 15 1.600" stroke-width="2.300"/><path d="M1259 35.200000000000045c4.200-1.200 8.500-.8 12 1.300" stroke-width="1.900"/></g><circle cx="1320.8" cy="31" r="14.800" fill="#fbc116"/><path d="M1320.8 31L1308.0 23.6A14.800 14.800 0 0 1 1333.6 23.6z" fill="#e33b2e"/><path d="M1320.8 31L1308.0 23.6A14.800 14.800 0 0 0 1320.8 45.8z" fill="#2da94f"/><circle cx="1320.8" cy="31" r="6.800" fill="#fff"/><circle cx="1320.8" cy="31" r="5.400" fill="#4285f4"/><circle cx="1331.600" cy="19.799999999999955" r="10" fill="#8f9a86"/><path d="M1323 22a10 10 0 0 0 17 4.500l0-4.500z" fill="#6f7c5f"/><rect x="1330.200" y="17" width="3" height="8.500" fill="#2d2d2d"/><ellipse cx="1331.600" cy="14" rx="7" ry="3.500" fill="#c9ccd0" opacity=".8"/><defs><linearGradient id="ph" x1="0" y1="0" x2="1" y2="1"><stop offset="0" stop-color="#1d6fe0"/><stop offset="1" stop-color="#5b4fd0"/></linearGradient><clipPath id="phc"><rect x="1362.800" y="18" width="26.600" height="26" rx="4"/></clipPath></defs><rect x="1362.800" y="18" width="26.600" height="26" rx="4" fill="url(#ph)"/><g clip-path="url(#phc)"><path d="M1360 44l15-16l8 8l4-4l8 9v5h-35z" fill="#3cc4f5"/><path d="M1372 45l11-10l8 8v3z" fill="#1f9be8"/></g><circle cx="1382.500" cy="23.299999999999955" r="2.300" fill="#eaf4ff"/><rect x="1406" y="6.400000000000091" width="50" height="50" rx="5" fill="#2c2c2c"/><defs><linearGradient id="pb1" x1="0" y1="0" x2="0" y2="1"><stop offset="0" stop-color="#e6ad10"/><stop offset="1" stop-color="#c87e0e"/></linearGradient><linearGradient id="pb2" x1="0" y1="0" x2="0" y2="1"><stop offset="0" stop-color="#f6d751"/><stop offset="1" stop-color="#e6ad10"/></linearGradient><linearGradient id="pb3" x1="0" y1="0" x2="0" y2="1"><stop offset="0" stop-color="#f9e589"/><stop offset="1" stop-color="#f2c811"/></linearGradient></defs><rect x="1432.500" y="15.599999999999909" width="10" height="30" rx="1.200" fill="url(#pb1)"/><rect x="1425.300" y="23" width="10" height="22.600" rx="1.200" fill="url(#pb2)"/><rect x="1418.200" y="30.5" width="10" height="15.100" rx="1.200" fill="url(#pb3)"/><path d="M1626.800 34.5l6.200-6.200l6.200 6.200" fill="none" stroke="#fff" stroke-width="1.800"/><g fill="none" stroke="#fff" stroke-width="1.500" stroke-linecap="round"><path d="M1721.300 29a10.500 10.500 0 0 1 14 0"/><path d="M1723.800 32a6.800 6.800 0 0 1 9 0"/><path d="M1726.300 34.799999999999955a3.200 3.200 0 0 1 4 0" stroke="#fff"/></g><circle cx="1728.300" cy="36.799999999999955" r="1.300" fill="#fff"/><path d="M1748.800 28h3.500l5-4.500v15l-5-4.500h-3.500z" fill="none" stroke="#fff" stroke-width="1.400" stroke-linejoin="round"/><g fill="none" stroke="#fff" stroke-width="1.400" stroke-linecap="round"><path d="M1760 28a4 4 0 0 1 0 6"/><path d="M1762.500 25.5a7.500 7.500 0 0 1 0 11"/><path d="M1765 23.299999999999955a10.800 10.800 0 0 1 0 15.400"/></g><path d="M1787 25.5h6.500a1.800 1.800 0 0 1 1.800 1.800v7.500a1.800 1.800 0 0 1 -1.800 1.800h-13.500M1795.500 29h1.800v4h-1.800" fill="none" stroke="#fff" stroke-width="1.400"/><path d="M1779 34.5c-1.500-6 2-11 7.500-12.500c.5 5-1 9.500-7.500 12.500zM1778.500 36c1.500-3.500 3.500-6.500 6-9" fill="#fff" stroke="#fff" stroke-width="1"/></svg>
<span class="t" style="left:567.40px;top:22.34px;font-size:18.5px;line-height:18.5px;color:#e6e6e6;transform:scaleX(0.8666);">Search</span>
<span class="t" style="left:984.50px;top:27.30px;font-size:8.5px;line-height:8.5px;color:#fff;font-weight:700;transform:scaleX(0.9488);">ISP</span>
<span class="t" style="left:1165.00px;top:15.14px;font-size:12px;line-height:12px;color:#fff;">1</span>
<span class="t" style="left:1667.10px;top:24.55px;font-size:14px;line-height:14px;color:#fff;transform:scaleX(0.9229);">ENG</span>
<span class="t" style="left:1841.10px;top:13.14px;font-size:14.6px;line-height:14.6px;color:#fff;transform:scaleX(1.0174);">5:08 AM</span>
<span class="t" style="left:1819.70px;top:33.04px;font-size:14.6px;line-height:14.6px;color:#fff;transform:scaleX(1.0387);">10/28/2025</span>
</div>
<span class="t" lang="ar" dir="rtl" style="left:847px;top:942px;font-family:'DejaVu Sans',sans-serif;font-weight:700;font-size:66px;line-height:90px;color:#e7e6e4;-webkit-text-stroke:4.500px #e7e6e4;transform:scaleX(1.07)">نفذلي</span>
<span class="t" style="left:855.5px;top:1026.500px;font-size:36.500px;line-height:42px;color:rgba(215,215,215,.82);-webkit-text-stroke:0.8px rgba(215,215,215,.82);letter-spacing:0.250px">nafezly.com</span>
<div class="r" style="left:862.500px;top:1021px;width:14px;height:14px;border-radius:7px;background:#c9c9c9"></div><div class="r" style="left:877.500px;top:1021px;width:14px;height:14px;border-radius:7px;background:#c9c9c9"></div>
<div class="r canvas" style="left:51px;top:200px;width:1166.4px;height:656px;background:#333">
<div class="r card" style="left:9px;top:15px;width:809px;height:71px;">
</div>
<span class="t" style="left:279.20px;top:27.38px;font-size:22px;line-height:22px;color:#fff;font-weight:700;transform:scaleX(0.9953);font-family:'Liberation Serif',serif;">Ecommerce sales Dashboard</span>
<div class="r card" style="left:830px;top:15px;width:327px;height:71px;">
</div>
<span class="t" style="left:848.00px;top:28.34px;font-size:12px;line-height:12px;color:#252423;transform:scaleX(1.0707);">State</span>
<div class="r" style="left:845px;top:47px;width:298px;height:26px;border:1px solid #c8c8c8;background:#686868"></div>
<div class="r card" style="left:9px;top:95px;width:285px;height:129px;">
</div>
<span class="t" style="left:97.25px;top:128.82px;font-size:55.5px;line-height:55.5px;color:#fff;font-weight:700;transform:scaleX(0.9957);">23M</span>
<span class="t" style="left:96.50px;top:185.93px;font-size:14.5px;line-height:14.5px;color:#fff;font-weight:700;">Sum Of Amount</span>
<div class="r card" style="left:306px;top:95px;width:285px;height:129px;">
</div>
<span class="t" style="left:402.75px;top:128.82px;font-size:55.5px;line-height:55.5px;color:#fff;font-weight:700;">188</span>
<span class="t" style="left:392.25px;top:185.93px;font-size:14.5px;line-height:14.5px;color:#fff;font-weight:700;transform:scaleX(0.9922);">Sum Of Quantity</span>
<div class="r card" style="left:606px;top:95px;width:265px;height:129px;">
</div>
<span class="t" style="left:672.75px;top:128.82px;font-size:55.5px;line-height:55.5px;color:#fff;font-weight:700;">165K</span>
<span class="t" style="left:690.00px;top:185.93px;font-size:14.5px;line-height:14.5px;color:#fff;font-weight:700;">Sum of  Profit</span>
<div class="r card" style="left:881px;top:96px;width:277px;height:129px;">
</div>
<span class="t" style="left:914.75px;top:130.32px;font-size:55.5px;line-height:55.5px;color:#fff;font-weight:700;">261.74K</span>
<span class="t" style="left:976.50px;top:188.43px;font-size:14.5px;line-height:14.5px;color:#fff;font-weight:700;transform:scaleX(0.9946);">Sum Of AOV</span>
<div class="r card" style="left:9px;top:234px;width:536px;height:230px;">
</div>
<span class="t" style="left:220.00px;top:242.09px;font-size:18.2px;line-height:18.2px;color:#fff;font-weight:700;">Profit By Day</span>
<span class="t" style="left:20.15px;top:293.74px;font-size:10px;line-height:10px;color:#ebebeb;font-weight:700;">30K</span>
<span class="t" style="left:20.15px;top:338.03px;font-size:10px;line-height:10px;color:#ebebeb;font-weight:700;">20K</span>
<span class="t" style="left:20.15px;top:382.34px;font-size:10px;line-height:10px;color:#ebebeb;font-weight:700;">10K</span>
<span class="t" style="left:25.72px;top:426.63px;font-size:10px;line-height:10px;color:#ebebeb;font-weight:700;">0K</span>
<span class="t" style="left:52.38px;top:437.61px;font-size:10.5px;line-height:10.5px;color:#ebebeb;font-weight:700;">0</span>
<span class="t" style="left:150.53px;top:437.61px;font-size:10.5px;line-height:10.5px;color:#ebebeb;font-weight:700;">5</span>
<span class="t" style="left:245.76px;top:437.61px;font-size:10.5px;line-height:10.5px;color:#ebebeb;font-weight:700;">10</span>
<span class="t" style="left:343.91px;top:437.61px;font-size:10.5px;line-height:10.5px;color:#ebebeb;font-weight:700;">15</span>
<span class="t" style="left:442.06px;top:437.61px;font-size:10.5px;line-height:10.5px;color:#ebebeb;font-weight:700;">20</span>
<svg class="r" style="left:0px;top:0px;" width="1166" height="656" viewBox="0 0 1166 656"><rect x="67.73" y="409.35" width="14.4" height="22.15" fill="#118dff"/><rect x="87.36" y="427.96" width="14.4" height="3.54" fill="#e8855a"/><rect x="106.99" y="409.35" width="14.4" height="22.15" fill="#118dff"/><rect x="126.62" y="426.41" width="14.4" height="5.09" fill="#e8855a"/><rect x="146.25" y="386.76" width="14.4" height="44.74" fill="#118dff"/><rect x="165.88" y="414.22" width="14.4" height="17.28" fill="#118dff"/><rect x="185.51" y="417.32" width="14.4" height="14.18" fill="#118dff"/><rect x="205.14" y="399.16" width="14.4" height="32.34" fill="#118dff"/><rect x="224.77" y="415.11" width="14.4" height="16.39" fill="#118dff"/><rect x="244.40" y="396.95" width="14.4" height="34.55" fill="#118dff"/><rect x="264.03" y="404.92" width="14.4" height="26.58" fill="#118dff"/><rect x="283.66" y="388.97" width="14.4" height="42.53" fill="#118dff"/><rect x="303.29" y="408.02" width="14.4" height="23.48" fill="#118dff"/><rect x="322.92" y="417.32" width="14.4" height="14.18" fill="#118dff"/><rect x="342.55" y="428.18" width="14.4" height="3.32" fill="#e8855a"/><rect x="362.18" y="409.35" width="14.4" height="22.15" fill="#118dff"/><rect x="381.81" y="417.32" width="14.4" height="14.18" fill="#118dff"/><rect x="401.44" y="367.71" width="14.4" height="63.79" fill="#118dff"/><rect x="421.07" y="293.28" width="14.4" height="138.22" fill="#118dff"/><rect x="440.70" y="375.68" width="14.4" height="55.82" fill="#118dff"/><rect x="460.33" y="415.55" width="14.4" height="15.95" fill="#118dff"/><rect x="479.96" y="389.86" width="14.4" height="41.64" fill="#118dff"/><rect x="499.59" y="421.75" width="14.4" height="9.75" fill="#e8855a"/><rect x="519.22" y="414.22" width="14.4" height="17.28" fill="#118dff"/></svg>
<span class="t" style="left:68.22px;top:392.11px;font-size:10.5px;line-height:10.5px;color:#ebebeb;font-weight:700;">5K</span>
<span class="t" style="left:87.85px;top:410.11px;font-size:10.5px;line-height:10.5px;color:#ebebeb;font-weight:700;">1K</span>
<span class="t" style="left:107.48px;top:392.11px;font-size:10.5px;line-height:10.5px;color:#ebebeb;font-weight:700;">5K</span>
<span class="t" style="left:127.11px;top:409.11px;font-size:10.5px;line-height:10.5px;color:#ebebeb;font-weight:700;">1K</span>
<span class="t" style="left:143.82px;top:369.11px;font-size:10.5px;line-height:10.5px;color:#ebebeb;font-weight:700;">10K</span>
<span class="t" style="left:166.37px;top:397.11px;font-size:10.5px;line-height:10.5px;color:#ebebeb;font-weight:700;">4K</span>
<span class="t" style="left:186.00px;top:400.11px;font-size:10.5px;line-height:10.5px;color:#ebebeb;font-weight:700;">4K</span>
<span class="t" style="left:205.63px;top:381.11px;font-size:10.5px;line-height:10.5px;color:#ebebeb;font-weight:700;">8K</span>
<span class="t" style="left:225.26px;top:397.11px;font-size:10.5px;line-height:10.5px;color:#ebebeb;font-weight:700;">4K</span>
<span class="t" style="left:244.89px;top:380.11px;font-size:10.5px;line-height:10.5px;color:#ebebeb;font-weight:700;">8K</span>
<span class="t" style="left:264.52px;top:387.11px;font-size:10.5px;line-height:10.5px;color:#ebebeb;font-weight:700;">6K</span>
<span class="t" style="left:281.23px;top:372.11px;font-size:10.5px;line-height:10.5px;color:#ebebeb;font-weight:700;">10K</span>
<span class="t" style="left:303.78px;top:391.11px;font-size:10.5px;line-height:10.5px;color:#ebebeb;font-weight:700;">6K</span>
<span class="t" style="left:323.41px;top:400.11px;font-size:10.5px;line-height:10.5px;color:#ebebeb;font-weight:700;">4K</span>
<span class="t" style="left:343.04px;top:410.11px;font-size:10.5px;line-height:10.5px;color:#ebebeb;font-weight:700;">1K</span>
<span class="t" style="left:362.67px;top:392.11px;font-size:10.5px;line-height:10.5px;color:#ebebeb;font-weight:700;">5K</span>
<span class="t" style="left:382.30px;top:400.11px;font-size:10.5px;line-height:10.5px;color:#ebebeb;font-weight:700;">4K</span>
<span class="t" style="left:399.01px;top:350.11px;font-size:10.5px;line-height:10.5px;color:#ebebeb;font-weight:700;">15K</span>
<span class="t" style="left:418.64px;top:276.11px;font-size:10.5px;line-height:10.5px;color:#ebebeb;font-weight:700;">31K</span>
<span class="t" style="left:438.27px;top:358.11px;font-size:10.5px;line-height:10.5px;color:#ebebeb;font-weight:700;">13K</span>
<span class="t" style="left:460.82px;top:398.11px;font-size:10.5px;line-height:10.5px;color:#ebebeb;font-weight:700;">4K</span>
<span class="t" style="left:477.53px;top:372.11px;font-size:10.5px;line-height:10.5px;color:#ebebeb;font-weight:700;">10K</span>
<span class="t" style="left:500.08px;top:405.11px;font-size:10.5px;line-height:10.5px;color:#ebebeb;font-weight:700;">2K</span>
<span class="t" style="left:519.71px;top:397.11px;font-size:10.5px;line-height:10.5px;color:#ebebeb;font-weight:700;">4K</span>
<div class="r card" style="left:555px;top:234px;width:301px;height:230px;">
</div>
<span class="t" style="left:578.00px;top:242.09px;font-size:18.2px;line-height:18.2px;color:#fff;font-weight:700;">Sum Of Quantity By Category</span>
<svg class="r" style="left:0px;top:0px;" width="1166" height="656" viewBox="0 0 1166 656"><path d="M705.70 290.00A69 69 0 0 1 717.82 426.93L712.90 399.36A41 41 0 0 0 705.70 318.00Z" fill="#a0d1ff"/><path d="M717.82 426.93A69 69 0 0 1 639.10 377.04L666.13 369.72A41 41 0 0 0 712.90 399.36Z" fill="#e6c84d"/><path d="M639.10 377.04A69 69 0 0 1 660.95 306.48L679.11 327.79A41 41 0 0 0 666.13 369.72Z" fill="#f5b2d9"/><path d="M660.95 306.48A69 69 0 0 1 705.70 290.00L705.70 318.00A41 41 0 0 0 679.11 327.79Z" fill="#118dff"/></svg>
<span class="t" style="left:627.00px;top:280.11px;font-size:10.5px;line-height:10.5px;color:#fff;font-weight:700;transform:scaleX(1.0561);">11.24%</span>
<span class="t" style="left:579.00px;top:330.11px;font-size:10.5px;line-height:10.5px;color:#fff;font-weight:700;transform:scaleX(1.0390);">17.98%</span>
<span class="t" style="left:618.00px;top:419.11px;font-size:10.5px;line-height:10.5px;color:#fff;font-weight:700;transform:scaleX(1.0412);">23.6%</span>
<span class="t" style="left:798.00px;top:347.11px;font-size:10.5px;line-height:10.5px;color:#fff;font-weight:700;transform:scaleX(1.0530);">47.19%</span>
<div class="r card" style="left:871px;top:234px;width:287px;height:230px;">
</div>
<span class="t" style="left:885.20px;top:242.21px;font-size:15.7px;line-height:15.7px;color:#fff;font-weight:700;">Sum Of Quantity By PaymentMode</span>
<svg class="r" style="left:0px;top:0px;" width="1166" height="656" viewBox="0 0 1166 656"><path d="M1014.60 289.00A69 69 0 0 1 1077.99 385.24L1052.27 374.19A41 41 0 0 0 1014.60 317.00Z" fill="#118dff"/><path d="M1077.99 385.24A69 69 0 0 1 993.03 423.54L1001.78 396.95A41 41 0 0 0 1052.27 374.19Z" fill="#12239e"/><path d="M993.03 423.54A69 69 0 0 1 946.47 347.08L974.12 351.51A41 41 0 0 0 1001.78 396.95Z" fill="#e66c37"/><path d="M946.47 347.08A69 69 0 0 1 1014.60 289.00L1014.60 317.00A41 41 0 0 0 974.12 351.51Z" fill="#6b007b"/></svg>
<span class="t" style="left:910.00px;top:279.11px;font-size:10.5px;line-height:10.5px;color:#fff;font-weight:700;transform:scaleX(1.0510);">Visa 22.47%</span>
<span class="t" style="left:1066.00px;top:284.11px;font-size:10.5px;line-height:10.5px;color:#fff;font-weight:700;transform:scaleX(1.0346);">PayPal 31.46%</span>
<span class="t" style="left:891.00px;top:406.61px;font-size:10.5px;line-height:10.5px;color:#fff;font-weight:700;transform:scaleX(1.0472);">MasterCard</span>
<span class="t" style="left:914.00px;top:418.61px;font-size:10.5px;line-height:10.5px;color:#fff;font-weight:700;transform:scaleX(1.0530);">22.47%</span>
<span class="t" style="left:1061.00px;top:423.11px;font-size:10.5px;line-height:10.5px;color:#fff;font-weight:700;transform:scaleX(1.0366);">Cash 23.6%</span>
<div class="r card" style="left:1px;top:492px;width:399px;height:164px;">
</div>
<span class="t" style="left:56.30px;top:500.89px;font-size:18.2px;line-height:18.2px;color:#fff;font-weight:700;">Sum of  Cost  by Customer Name</span>
<svg class="r" style="left:0px;top:0px;" width="1166" height="656" viewBox="0 0 1166 656"><rect x="115.00" y="539.80" width="231.50" height="13.6" fill="#1cf55f"/><rect x="115.00" y="561.00" width="182.00" height="13" fill="#118dff"/><rect x="115.00" y="581.80" width="182.00" height="13" fill="#118dff"/><rect x="115.00" y="602.80" width="181.50" height="13" fill="#118dff"/></svg>
<span class="t" style="left:40.39px;top:541.51px;font-size:10.5px;line-height:10.5px;color:#ebebeb;font-weight:700;transform:scaleX(0.9700);">William White</span>
<span class="t" style="left:317.82px;top:541.01px;font-size:10.5px;line-height:10.5px;color:#c8f7d8;font-weight:700;">9.6K</span>
<span class="t" style="left:40.83px;top:562.41px;font-size:10.5px;line-height:10.5px;color:#ebebeb;font-weight:700;transform:scaleX(0.9700);">Amelia Green</span>
<span class="t" style="left:305.00px;top:561.91px;font-size:10.5px;line-height:10.5px;color:#ebebeb;font-weight:700;">7.6K</span>
<span class="t" style="left:51.41px;top:583.21px;font-size:10.5px;line-height:10.5px;color:#ebebeb;font-weight:700;transform:scaleX(0.9700);">Olivia Allen</span>
<span class="t" style="left:305.00px;top:582.71px;font-size:10.5px;line-height:10.5px;color:#ebebeb;font-weight:700;">7.6K</span>
<span class="t" style="left:43.12px;top:604.21px;font-size:10.5px;line-height:10.5px;color:#ebebeb;font-weight:700;transform:scaleX(0.9700);">Mason Smith</span>
<span class="t" style="left:304.50px;top:603.71px;font-size:10.5px;line-height:10.5px;color:#ebebeb;font-weight:700;">7.6K</span>
<span class="t" style="left:108.61px;top:631.83px;font-size:10px;line-height:10px;color:#ebebeb;font-weight:700;">0K</span>
<span class="t" style="left:229.21px;top:631.83px;font-size:10px;line-height:10px;color:#ebebeb;font-weight:700;">5K</span>
<span class="t" style="left:347.43px;top:631.83px;font-size:10px;line-height:10px;color:#ebebeb;font-weight:700;">10K</span>
<div class="r" style="left:382px;top:531.5px;width:7px;height:95.5px;background:#a0a0a0"></div>
<div class="r" style="left:382px;top:531.5px;width:7px;height:6px;background:#666;border:1px solid #fff"></div>
<div class="r card" style="left:414px;top:492px;width:355px;height:164px;">
</div>
<span class="t" style="left:483.50px;top:500.89px;font-size:18.2px;line-height:18.2px;color:#fff;font-weight:700;">Sum Of Amount By State</span>
<svg class="r" style="left:0px;top:0px;" width="1166" height="656" viewBox="0 0 1166 656"><rect x="518.00" y="539.80" width="198.40" height="13.6" fill="#e8c860"/><rect x="518.00" y="561.00" width="121.50" height="13" fill="#e4e4e4"/><rect x="518.00" y="581.80" width="109.00" height="13" fill="#a0d1ff"/><rect x="518.00" y="602.80" width="87.00" height="13" fill="#d64550"/></svg>
<span class="t" style="left:462.03px;top:541.51px;font-size:10.5px;line-height:10.5px;color:#ebebeb;font-weight:700;transform:scaleX(0.9700);">California</span>
<span class="t" style="left:689.74px;top:541.01px;font-size:10.5px;line-height:10.5px;color:#f3e3a8;font-weight:700;">38K</span>
<span class="t" style="left:445.06px;top:562.41px;font-size:10.5px;line-height:10.5px;color:#ebebeb;font-weight:700;transform:scaleX(0.9700);">New South ...</span>
<span class="t" style="left:647.50px;top:561.91px;font-size:10.5px;line-height:10.5px;color:#ebebeb;font-weight:700;">24K</span>
<span class="t" style="left:450.70px;top:583.21px;font-size:10.5px;line-height:10.5px;color:#ebebeb;font-weight:700;transform:scaleX(0.9700);">Queensland</span>
<span class="t" style="left:635.00px;top:582.71px;font-size:10.5px;line-height:10.5px;color:#ebebeb;font-weight:700;">21K</span>
<span class="t" style="left:451.11px;top:604.21px;font-size:10.5px;line-height:10.5px;color:#ebebeb;font-weight:700;transform:scaleX(0.9700);">Washington</span>
<span class="t" style="left:613.00px;top:603.71px;font-size:10.5px;line-height:10.5px;color:#ebebeb;font-weight:700;">17K</span>
<span class="t" style="left:511.61px;top:631.83px;font-size:10px;line-height:10px;color:#ebebeb;font-weight:700;">0K</span>
<span class="t" style="left:612.13px;top:631.83px;font-size:10px;line-height:10px;color:#ebebeb;font-weight:700;">20K</span>
<span class="t" style="left:715.73px;top:631.83px;font-size:10px;line-height:10px;color:#ebebeb;font-weight:700;">40K</span>
<div class="r" style="left:750.5px;top:531.5px;width:7px;height:95.5px;background:#a0a0a0"></div>
<div class="r" style="left:750.5px;top:531.5px;width:7px;height:22px;background:#777;border:1px solid #fff"></div>
<div class="r card" style="left:781px;top:492px;width:377px;height:164px;">
</div>
<span class="t" style="left:862.00px;top:500.89px;font-size:18.2px;line-height:18.2px;color:#fff;font-weight:700;">Sum Of Amount By State</span>
<svg class="r" style="left:0px;top:0px;" width="1166" height="656" viewBox="0 0 1166 656"><rect x="882.70" y="569.00" width="216.30" height="18.7" fill="#eeb5b8"/></svg>
<span class="t" style="left:799.67px;top:572.84px;font-size:11px;line-height:11px;color:#ebebeb;transform:scaleX(0.9950);">Mountain Bikes</span>
<span class="t" style="left:1107.00px;top:572.76px;font-size:10.5px;line-height:10.5px;color:#ebebeb;font-weight:700;">165K</span>
<span class="t" style="left:876.11px;top:631.83px;font-size:10px;line-height:10px;color:#ebebeb;font-weight:700;">0K</span>
<span class="t" style="left:1003.05px;top:631.83px;font-size:10px;line-height:10px;color:#ebebeb;font-weight:700;">100K</span>
</div>
</body></html>
